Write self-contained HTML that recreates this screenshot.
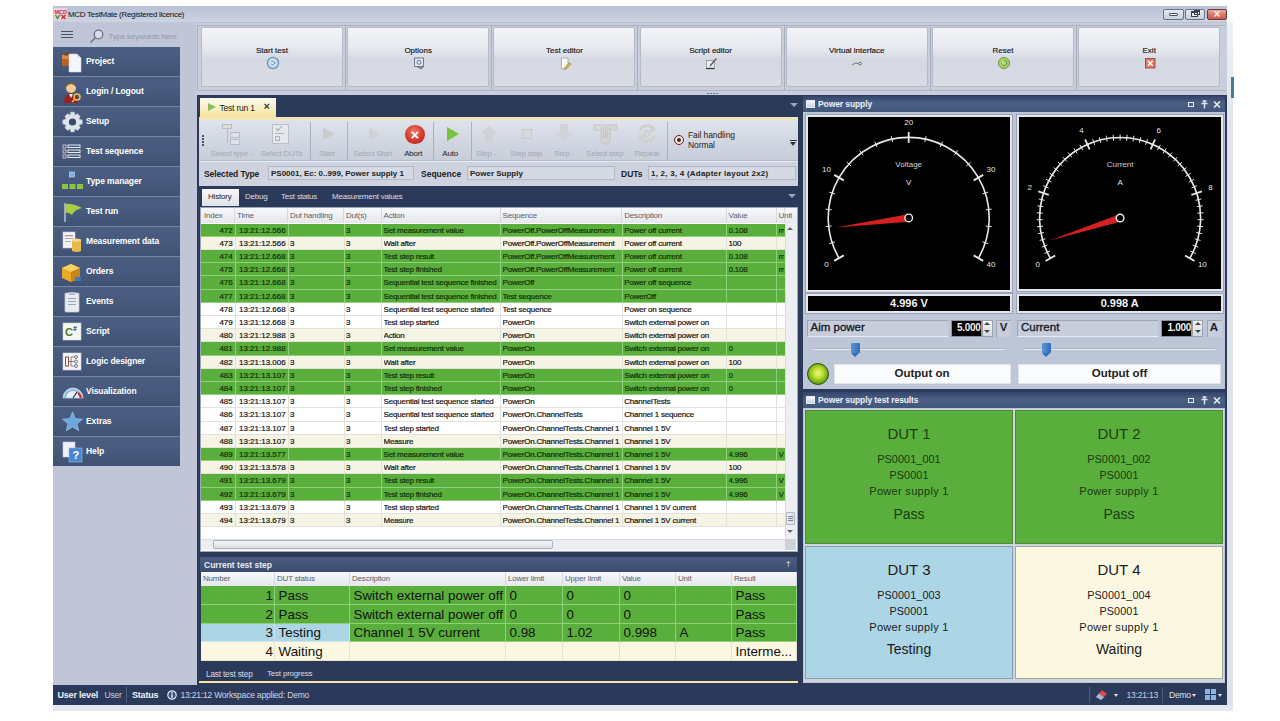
<!DOCTYPE html><html><head><meta charset="utf-8"><style>
*{box-sizing:border-box;margin:0;padding:0}
html,body{width:1280px;height:721px;overflow:hidden;background:#fff;font-family:"Liberation Sans",sans-serif;color:#000}
div,span{position:absolute;white-space:nowrap}
.nav{left:53px;width:127px;height:28.5px;background:linear-gradient(#4b5e81,#475a7d 50%,#3f5274);color:#fff;font-weight:bold;font-size:8.5px}
.nav span{left:33px;top:9px;letter-spacing:-0.1px}
.hl{left:53px;width:128px;height:1px;background:#8494b0}
.tbtn{top:27px;width:142px;height:60px;border:1px solid #b3bbc8;border-radius:2px;background:linear-gradient(#f3f4f8,#e6e8ee 35%,#d4d8e1 55%,#d9dce5);text-align:center;font-size:8px;color:#151515;-webkit-text-stroke:0.15px currentColor}
.tbtn span{left:0;right:0;top:18px;text-align:center}
.tbtn i{position:absolute;left:64px;top:30px;width:13px;height:13px}
.g{font-size:8px;color:#111;letter-spacing:-0.2px;-webkit-text-stroke:0.2px currentColor}
</style></head><body>
<div style="left:53px;top:6px;width:1174px;height:699px;background:#c0c6d8"></div>
<div style="left:53px;top:705px;width:1174px;height:6px;background:#e3e8f0"></div>
<div style="left:53px;top:6px;width:1174px;height:16px;background:linear-gradient(#b8c1d5,#ccd3e2)"></div>
<svg style="position:absolute;left:54px;top:8px" width="13" height="12" viewBox="0 0 13 12"><rect x="0" y="0" width="13" height="12" fill="#f0d4d8"/><text x="0.5" y="5.5" font-size="5.5" font-weight="bold" fill="#c03040" font-family="Liberation Sans">MCD</text><path d="M1.5 7 L3.5 10.5 L6 6.5" fill="none" stroke="#3a8a3a" stroke-width="1.4"/><path d="M7.5 7 L11.5 11 M11.5 7 L7.5 11" stroke="#c03040" stroke-width="1.6"/></svg>
<div style="left:68px;top:9.5px;font-size:8px;color:#111;letter-spacing:-0.3px">MCD TestMate (Registered licence)</div>
<div style="left:1163px;top:9px;width:21px;height:11px;border:1px solid #6a7384;border-radius:2px;background:linear-gradient(#e4eaf1,#c6d0dc)"></div>
<div style="left:1185px;top:9px;width:20px;height:11px;border:1px solid #6a7384;border-radius:2px;background:linear-gradient(#e4eaf1,#c6d0dc)"></div>
<div style="left:1207px;top:9px;width:20px;height:11px;border:1px solid #6a3a38;border-radius:2px;background:linear-gradient(#eeaa9c,#d8786a 50%,#c85a4c)"></div>
<div style="left:1169px;top:13px;width:9px;height:3px;background:#f4f6f9;border:1px solid #4a5264;border-radius:1px"></div>
<div style="left:1191px;top:11px;width:7px;height:6px;border:1px solid #3a4252;border-top-width:2px;background:#eef1f5"></div>
<div style="left:1194px;top:10px;width:6px;height:5px;border:1px solid #3a4252;border-top-width:2px"></div>
<div style="left:1207px;width:20px;top:9px;text-align:center;font-size:12px;font-weight:bold;color:#fbe8e4;line-height:11px">&#215;</div>
<div style="left:53px;top:22px;width:144px;height:663px;background:#c0c5d8"></div>
<div style="left:53px;top:47px;width:127px;height:418px;background:#7487a7"></div>
<div class="nav" style="top:47.0px"><span>Project</span></div>
<div class="nav" style="top:77.0px"><span>Login / Logout</span></div>
<div class="nav" style="top:107.0px"><span>Setup</span></div>
<div class="nav" style="top:137.0px"><span>Test sequence</span></div>
<div class="nav" style="top:167.0px"><span>Type manager</span></div>
<div class="nav" style="top:197.0px"><span>Test run</span></div>
<div class="nav" style="top:227.0px"><span>Measurement data</span></div>
<div class="nav" style="top:257.0px"><span>Orders</span></div>
<div class="nav" style="top:287.0px"><span>Events</span></div>
<div class="nav" style="top:317.0px"><span>Script</span></div>
<div class="nav" style="top:347.0px"><span>Logic designer</span></div>
<div class="nav" style="top:377.0px"><span>Visualization</span></div>
<div class="nav" style="top:407.0px"><span>Extras</span></div>
<div class="nav" style="top:437.0px"><span>Help</span></div>
<div style="left:196px;top:22px;width:1031px;height:73px;background:#c8cedb;border-top:1px solid #b8bfcd"></div>
<div style="left:197px;top:25px;width:1029px;height:1px;background:#a9b1c1"></div>
<div style="left:197px;top:89.5px;width:1029px;height:1px;background:#b0b8c6"></div>
<div style="left:197px;top:26px;width:1px;height:64px;background:#a9b1c1"></div>
<div style="left:344.9px;top:26px;width:1px;height:64px;background:#a6aebe"></div>
<div style="left:491.1px;top:26px;width:1px;height:64px;background:#a6aebe"></div>
<div style="left:637.3px;top:26px;width:1px;height:64px;background:#a6aebe"></div>
<div style="left:783.5px;top:26px;width:1px;height:64px;background:#a6aebe"></div>
<div style="left:929.7px;top:26px;width:1px;height:64px;background:#a6aebe"></div>
<div style="left:1075.9px;top:26px;width:1px;height:64px;background:#a6aebe"></div>
<div class="tbtn" style="left:201.0px"><span>Start test</span></div>
<div class="tbtn" style="left:347.2px"><span>Options</span></div>
<div class="tbtn" style="left:493.4px"><span>Test editor</span></div>
<div class="tbtn" style="left:639.6px"><span>Script editor</span></div>
<div class="tbtn" style="left:785.8px"><span>Virtual interface</span></div>
<div class="tbtn" style="left:932.0px"><span>Reset</span></div>
<div class="tbtn" style="left:1078.2px"><span>Exit</span></div>
<div style="left:197px;top:95px;width:1030px;height:590px;background:#2c3a5a"></div>
<div style="left:200px;top:98px;width:76px;height:20px;background:linear-gradient(#fcf9ee,#f8efc6 55%,#f5dd8e)"></div>
<div style="left:207.5px;top:102.5px;width:0;height:0;border-top:4px solid transparent;border-bottom:4px solid transparent;border-left:8px solid #8cbc5a"></div>
<div style="left:219.5px;top:102.5px;font-size:8.6px;color:#1a1a1a;letter-spacing:-0.25px">Test run 1</div>
<div style="left:263.5px;top:100px;font-size:11px;font-weight:bold;color:#3a3a3a">&#215;</div>
<div style="left:790px;top:103px;width:0;height:0;border-left:4px solid transparent;border-right:4px solid transparent;border-top:4px solid #9aa6bd"></div>
<div style="left:199px;top:116.5px;width:599px;height:3.5px;background:#f0e6b8"></div>
<div style="left:199px;top:120px;width:599px;height:41px;background:linear-gradient(#dfe3ec,#d2d7e2 50%,#c8ceda);border-bottom:1px solid #b3bbca"></div>
<div style="left:202px;top:135px;width:2px;height:2px;background:#4b5670"></div>
<div style="left:202px;top:138px;width:2px;height:2px;background:#4b5670"></div>
<div style="left:202px;top:141px;width:2px;height:2px;background:#4b5670"></div>
<div style="left:202px;top:144px;width:2px;height:2px;background:#4b5670"></div>
<div style="left:310px;top:122px;width:1px;height:38px;background:#a9b0be"></div>
<div style="left:347px;top:122px;width:1px;height:38px;background:#a9b0be"></div>
<div style="left:433px;top:122px;width:1px;height:38px;background:#a9b0be"></div>
<div style="left:471px;top:122px;width:1px;height:38px;background:#a9b0be"></div>
<div style="left:667px;top:122px;width:1px;height:38px;background:#a9b0be"></div>
<div style="left:210.5px;top:149px;font-size:8px;color:#a2a8b2;letter-spacing:-0.2px">Select type -</div>
<div style="left:260.5px;top:149px;font-size:8px;color:#a2a8b2;letter-spacing:-0.2px">Select DUTs</div>
<div style="left:319px;top:149px;font-size:8px;color:#a2a8b2;letter-spacing:-0.2px">Start</div>
<div style="left:353.4px;top:149px;font-size:8px;color:#a2a8b2;letter-spacing:-0.2px">Select Start</div>
<div style="left:404.2px;top:149px;font-size:8px;color:#222;letter-spacing:-0.2px">Abort</div>
<div style="left:442.3px;top:149px;font-size:8px;color:#222;letter-spacing:-0.2px">Auto</div>
<div style="left:476px;top:149px;font-size:8px;color:#a2a8b2;letter-spacing:-0.2px">Step -</div>
<div style="left:510px;top:149px;font-size:8px;color:#a2a8b2;letter-spacing:-0.2px">Step stop</div>
<div style="left:554px;top:149px;font-size:8px;color:#a2a8b2;letter-spacing:-0.2px">Step -</div>
<div style="left:586px;top:149px;font-size:8px;color:#a2a8b2;letter-spacing:-0.2px">Select step</div>
<div style="left:634.4px;top:149px;font-size:8px;color:#a2a8b2;letter-spacing:-0.2px">Repeat</div>
<div style="left:222px;top:124px;width:10px;height:4.5px;border:1px solid #b8bcc4;background:#dcdcd8"></div>
<div style="left:227px;top:128px;width:1px;height:15px;background:#b6bcc8"></div>
<div style="left:230px;top:132px;width:10px;height:6px;border:1px solid #b6bcc8;background:#dfe2e8"></div>
<div style="left:230px;top:139px;width:10px;height:6px;border:1px solid #b6bcc8;background:#dfe2e8"></div>
<div style="left:272px;top:124px;width:17px;height:20px;border:1px solid #b9bec9;background:#e6e8ec"></div>
<svg style="position:absolute;left:275px;top:125px" width="8" height="7" viewBox="0 0 8 7"><path d="M1 3.5 L3 5.5 L7 1" fill="none" stroke="#a8acb0" stroke-width="1.1"/></svg>
<div style="left:275px;top:133px;width:9px;height:1px;background:#b0b4ba"></div>
<div style="left:275px;top:136px;width:5px;height:5px;border:1px solid #aeb3bd"></div>
<div style="left:323px;top:128px;width:0;height:0;border-top:6px solid transparent;border-bottom:6px solid transparent;border-left:12px solid #c9cbc9"></div>
<div style="left:369px;top:128px;width:0;height:0;border-top:6px solid transparent;border-bottom:6px solid transparent;border-left:11px solid #cfd1d3"></div>
<div style="left:405px;top:124.5px;width:19.5px;height:19.5px;border-radius:50%;background:radial-gradient(circle at 45% 35%,#f07a6a,#d0392c 55%,#a8261d);box-shadow:0 0 1px #e9a8a0"></div>
<div style="left:407px;top:125px;width:16px;text-align:center;font-size:15px;line-height:19px;font-weight:bold;color:#fff">&#215;</div>
<div style="left:447px;top:127px;width:0;height:0;border-top:7px solid transparent;border-bottom:7px solid transparent;border-left:12px solid #78c23e"></div>
<div style="left:481px;top:125px;width:0;height:0;border-left:8px solid transparent;border-right:8px solid transparent;border-bottom:9px solid #cfd2d6"></div>
<div style="left:485px;top:134px;width:8px;height:9px;background:#cfd2d6"></div>
<div style="left:522px;top:129px;width:10px;height:10px;background:#d6d8dc;border:1px solid #c6c9ce"></div>
<div style="left:560px;top:124px;width:8px;height:9px;background:#cfd2d6"></div>
<div style="left:556px;top:133px;width:0;height:0;border-left:8px solid transparent;border-right:8px solid transparent;border-top:9px solid #cfd2d6"></div>
<svg style="position:absolute;left:593px;top:123px" width="25" height="22" viewBox="0 0 25 22"><path d="M1 2 H24 V7 H18 M1 2 V7 H7" fill="#d6d6d2" stroke="#c4c6c8" stroke-width="1"/><path d="M8 5 H17 V16 Q17 21 12.5 21 Q8 21 8 16 Z" fill="#d4d4d0" stroke="#c0c2c4" stroke-width="1"/><path d="M10.5 7 V15 M12.5 7 V15 M14.5 7 V15" stroke="#bcbec0" stroke-width="0.8"/></svg>
<svg style="position:absolute;left:636px;top:123px" width="22" height="21" viewBox="0 0 22 21"><path d="M4 8 A7.5 7.5 0 0 1 18 7" fill="none" stroke="#cfcfcb" stroke-width="2.6"/><path d="M18 13 A7.5 7.5 0 0 1 4 14" fill="none" stroke="#cfcfcb" stroke-width="2.6"/><path d="M15 4 L20 8 L14 9 Z" fill="#cfcfcb"/><path d="M7 17 L2 13 L8 12 Z" fill="#cfcfcb"/><circle cx="11" cy="10.5" r="3" fill="#d8d8d4" stroke="#c4c4c0" stroke-width="0.8"/></svg>
<div style="left:674px;top:135px;width:10px;height:10px;border-radius:50%;border:1.6px solid #6a1a1a;background:#efe6e0"></div>
<div style="left:677px;top:138px;width:4px;height:4px;border-radius:50%;background:#3a3028"></div>
<div style="left:688px;top:130px;font-size:8.5px;color:#222;letter-spacing:-0.1px">Fail handling</div>
<div style="left:688px;top:140px;font-size:8.5px;color:#222;letter-spacing:-0.1px">Normal</div>
<div style="left:790px;top:140px;width:7px;height:1px;background:#334"></div>
<div style="left:790px;top:142px;width:0;height:0;border-left:3.5px solid transparent;border-right:3.5px solid transparent;border-top:4px solid #334"></div>
<div style="left:199px;top:161px;width:599px;height:25px;background:#cdd2de;border-top:1px solid #e9ecf2"></div>
<div style="left:204px;top:169px;font-size:8.5px;font-weight:bold;color:#222;letter-spacing:-0.1px">Selected Type</div>
<div style="left:268px;top:166px;width:146px;height:14px;background:#d4d9e3;border:1px solid #b0b8c7"></div>
<div style="left:271px;top:168.5px;font-size:8px;font-weight:bold;color:#222">PS0001, Ec: 0..999, Power supply 1</div>
<div style="left:421px;top:169px;font-size:8.5px;font-weight:bold;color:#222">Sequence</div>
<div style="left:467px;top:166px;width:148px;height:14px;background:#d4d9e3;border:1px solid #b0b8c7"></div>
<div style="left:470px;top:168.5px;font-size:8px;font-weight:bold;color:#222">Power Supply</div>
<div style="left:621px;top:169px;font-size:8.5px;font-weight:bold;color:#222">DUTs</div>
<div style="left:648px;top:166px;width:148px;height:14px;background:#d4d9e3;border:1px solid #b0b8c7"></div>
<div style="left:651px;top:168.5px;font-size:8px;font-weight:bold;color:#222;letter-spacing:0.23px">1, 2, 3, 4 (Adapter layout 2x2)</div>
<div style="left:202px;top:189px;width:37px;height:17px;background:linear-gradient(#f6f7f9,#dfe2e8)"></div>
<div style="left:208px;top:192px;font-size:8px;color:#222;letter-spacing:-0.2px">History</div>
<div style="left:245px;top:192px;font-size:8px;color:#d8dde8;letter-spacing:-0.2px">Debug</div>
<div style="left:281px;top:192px;font-size:8px;color:#d8dde8;letter-spacing:-0.2px">Test status</div>
<div style="left:332px;top:192px;font-size:8px;color:#d8dde8;letter-spacing:-0.2px">Measurement values</div>
<div style="left:787.5px;top:194px;width:0;height:0;border-left:4px solid transparent;border-right:4px solid transparent;border-top:4px solid #9aa6bd"></div>
<div style="left:200px;top:207px;width:598px;height:345px;background:#fff;border:1px solid #9ea8ba"></div>
<div style="left:201px;top:208px;width:596px;height:15px;background:linear-gradient(#f7f8fa,#e5e7ec)"></div>
<div style="left:202px;top:208px;width:33px;height:15px;border-right:1px solid #d5d8de"></div>
<div class="g" style="left:204px;top:211px;color:#5c6068;-webkit-text-stroke:0">Index</div>
<div style="left:235px;top:208px;width:53px;height:15px;border-right:1px solid #d5d8de"></div>
<div class="g" style="left:237px;top:211px;color:#5c6068;-webkit-text-stroke:0">Time</div>
<div style="left:288px;top:208px;width:56px;height:15px;border-right:1px solid #d5d8de"></div>
<div class="g" style="left:290px;top:211px;color:#5c6068;-webkit-text-stroke:0">Dut handling</div>
<div style="left:344px;top:208px;width:37.5px;height:15px;border-right:1px solid #d5d8de"></div>
<div class="g" style="left:346px;top:211px;color:#5c6068;-webkit-text-stroke:0">Dut(s)</div>
<div style="left:381.5px;top:208px;width:119.0px;height:15px;border-right:1px solid #d5d8de"></div>
<div class="g" style="left:383.5px;top:211px;color:#5c6068;-webkit-text-stroke:0">Action</div>
<div style="left:500.5px;top:208px;width:121.79999999999995px;height:15px;border-right:1px solid #d5d8de"></div>
<div class="g" style="left:502.5px;top:211px;color:#5c6068;-webkit-text-stroke:0">Sequence</div>
<div style="left:622.3px;top:208px;width:104.30000000000007px;height:15px;border-right:1px solid #d5d8de"></div>
<div class="g" style="left:624.3px;top:211px;color:#5c6068;-webkit-text-stroke:0">Description</div>
<div style="left:726.6px;top:208px;width:50.0px;height:15px;border-right:1px solid #d5d8de"></div>
<div class="g" style="left:728.6px;top:211px;color:#5c6068;-webkit-text-stroke:0">Value</div>
<div style="left:776.6px;top:208px;width:8.399999999999977px;height:15px;border-right:1px solid #d5d8de"></div>
<div class="g" style="left:778.6px;top:211px;color:#5c6068;-webkit-text-stroke:0">Unit</div>
<div style="left:201px;top:223.50px;width:584px;height:13.20px;background:#5aae3c"></div>
<div style="left:234.5px;top:223.50px;width:1px;height:13.20px;background:#8fd07a"></div>
<div style="left:287.5px;top:223.50px;width:1px;height:13.20px;background:#8fd07a"></div>
<div style="left:343.5px;top:223.50px;width:1px;height:13.20px;background:#8fd07a"></div>
<div style="left:381.0px;top:223.50px;width:1px;height:13.20px;background:#8fd07a"></div>
<div style="left:500.0px;top:223.50px;width:1px;height:13.20px;background:#8fd07a"></div>
<div style="left:621.8px;top:223.50px;width:1px;height:13.20px;background:#8fd07a"></div>
<div style="left:726.1px;top:223.50px;width:1px;height:13.20px;background:#8fd07a"></div>
<div style="left:776.1px;top:223.50px;width:1px;height:13.20px;background:#8fd07a"></div>
<div style="left:201px;top:235.70px;width:584px;height:1px;background:#8fd07a"></div>
<div class="g" style="left:202px;width:30.5px;text-align:right;top:225.50px;color:#10300a;letter-spacing:-0.1px">472</div>
<div class="g" style="left:239px;top:225.50px;color:#10300a;overflow:hidden;width:50px;letter-spacing:0px">13:21:12.566</div>
<div class="g" style="left:346px;top:225.50px;color:#10300a;overflow:hidden;width:34.5px;letter-spacing:-0.2px">3</div>
<div class="g" style="left:383.5px;top:225.50px;color:#10300a;overflow:hidden;width:116.0px;letter-spacing:-0.2px">Set measurement value</div>
<div class="g" style="left:502.5px;top:225.50px;color:#10300a;overflow:hidden;width:118.79999999999995px;letter-spacing:-0.2px">PowerOff.PowerOffMeasurement</div>
<div class="g" style="left:624.3px;top:225.50px;color:#10300a;overflow:hidden;width:101.30000000000007px;letter-spacing:-0.2px">Power off current</div>
<div class="g" style="left:728.6px;top:225.50px;color:#10300a;overflow:hidden;width:47.0px;letter-spacing:-0.2px">0.108</div>
<div class="g" style="left:778.6px;top:225.50px;color:#10300a;overflow:hidden;width:5.399999999999977px;letter-spacing:-0.2px">m</div>
<div style="left:201px;top:236.70px;width:584px;height:13.20px;background:#f6f4e4"></div>
<div style="left:234.5px;top:236.70px;width:1px;height:13.20px;background:#e2e2da"></div>
<div style="left:287.5px;top:236.70px;width:1px;height:13.20px;background:#e2e2da"></div>
<div style="left:343.5px;top:236.70px;width:1px;height:13.20px;background:#e2e2da"></div>
<div style="left:381.0px;top:236.70px;width:1px;height:13.20px;background:#e2e2da"></div>
<div style="left:500.0px;top:236.70px;width:1px;height:13.20px;background:#e2e2da"></div>
<div style="left:621.8px;top:236.70px;width:1px;height:13.20px;background:#e2e2da"></div>
<div style="left:726.1px;top:236.70px;width:1px;height:13.20px;background:#e2e2da"></div>
<div style="left:776.1px;top:236.70px;width:1px;height:13.20px;background:#e2e2da"></div>
<div style="left:201px;top:248.90px;width:584px;height:1px;background:#e2e2da"></div>
<div class="g" style="left:202px;width:30.5px;text-align:right;top:238.70px;color:#151515;letter-spacing:-0.1px">473</div>
<div class="g" style="left:239px;top:238.70px;color:#151515;overflow:hidden;width:50px;letter-spacing:0px">13:21:12.566</div>
<div class="g" style="left:290px;top:238.70px;color:#151515;overflow:hidden;width:53px;letter-spacing:-0.2px">3</div>
<div class="g" style="left:346px;top:238.70px;color:#151515;overflow:hidden;width:34.5px;letter-spacing:-0.2px">3</div>
<div class="g" style="left:383.5px;top:238.70px;color:#151515;overflow:hidden;width:116.0px;letter-spacing:-0.2px">Wait after</div>
<div class="g" style="left:502.5px;top:238.70px;color:#151515;overflow:hidden;width:118.79999999999995px;letter-spacing:-0.2px">PowerOff.PowerOffMeasurement</div>
<div class="g" style="left:624.3px;top:238.70px;color:#151515;overflow:hidden;width:101.30000000000007px;letter-spacing:-0.2px">Power off current</div>
<div class="g" style="left:728.6px;top:238.70px;color:#151515;overflow:hidden;width:47.0px;letter-spacing:-0.2px">100</div>
<div style="left:201px;top:249.90px;width:584px;height:13.20px;background:#5aae3c"></div>
<div style="left:234.5px;top:249.90px;width:1px;height:13.20px;background:#8fd07a"></div>
<div style="left:287.5px;top:249.90px;width:1px;height:13.20px;background:#8fd07a"></div>
<div style="left:343.5px;top:249.90px;width:1px;height:13.20px;background:#8fd07a"></div>
<div style="left:381.0px;top:249.90px;width:1px;height:13.20px;background:#8fd07a"></div>
<div style="left:500.0px;top:249.90px;width:1px;height:13.20px;background:#8fd07a"></div>
<div style="left:621.8px;top:249.90px;width:1px;height:13.20px;background:#8fd07a"></div>
<div style="left:726.1px;top:249.90px;width:1px;height:13.20px;background:#8fd07a"></div>
<div style="left:776.1px;top:249.90px;width:1px;height:13.20px;background:#8fd07a"></div>
<div style="left:201px;top:262.10px;width:584px;height:1px;background:#8fd07a"></div>
<div class="g" style="left:202px;width:30.5px;text-align:right;top:251.90px;color:#10300a;letter-spacing:-0.1px">474</div>
<div class="g" style="left:239px;top:251.90px;color:#10300a;overflow:hidden;width:50px;letter-spacing:0px">13:21:12.668</div>
<div class="g" style="left:290px;top:251.90px;color:#10300a;overflow:hidden;width:53px;letter-spacing:-0.2px">3</div>
<div class="g" style="left:346px;top:251.90px;color:#10300a;overflow:hidden;width:34.5px;letter-spacing:-0.2px">3</div>
<div class="g" style="left:383.5px;top:251.90px;color:#10300a;overflow:hidden;width:116.0px;letter-spacing:-0.2px">Test step result</div>
<div class="g" style="left:502.5px;top:251.90px;color:#10300a;overflow:hidden;width:118.79999999999995px;letter-spacing:-0.2px">PowerOff.PowerOffMeasurement</div>
<div class="g" style="left:624.3px;top:251.90px;color:#10300a;overflow:hidden;width:101.30000000000007px;letter-spacing:-0.2px">Power off current</div>
<div class="g" style="left:728.6px;top:251.90px;color:#10300a;overflow:hidden;width:47.0px;letter-spacing:-0.2px">0.108</div>
<div class="g" style="left:778.6px;top:251.90px;color:#10300a;overflow:hidden;width:5.399999999999977px;letter-spacing:-0.2px">m</div>
<div style="left:201px;top:263.10px;width:584px;height:13.20px;background:#5aae3c"></div>
<div style="left:234.5px;top:263.10px;width:1px;height:13.20px;background:#8fd07a"></div>
<div style="left:287.5px;top:263.10px;width:1px;height:13.20px;background:#8fd07a"></div>
<div style="left:343.5px;top:263.10px;width:1px;height:13.20px;background:#8fd07a"></div>
<div style="left:381.0px;top:263.10px;width:1px;height:13.20px;background:#8fd07a"></div>
<div style="left:500.0px;top:263.10px;width:1px;height:13.20px;background:#8fd07a"></div>
<div style="left:621.8px;top:263.10px;width:1px;height:13.20px;background:#8fd07a"></div>
<div style="left:726.1px;top:263.10px;width:1px;height:13.20px;background:#8fd07a"></div>
<div style="left:776.1px;top:263.10px;width:1px;height:13.20px;background:#8fd07a"></div>
<div style="left:201px;top:275.30px;width:584px;height:1px;background:#8fd07a"></div>
<div class="g" style="left:202px;width:30.5px;text-align:right;top:265.10px;color:#10300a;letter-spacing:-0.1px">475</div>
<div class="g" style="left:239px;top:265.10px;color:#10300a;overflow:hidden;width:50px;letter-spacing:0px">13:21:12.668</div>
<div class="g" style="left:290px;top:265.10px;color:#10300a;overflow:hidden;width:53px;letter-spacing:-0.2px">3</div>
<div class="g" style="left:346px;top:265.10px;color:#10300a;overflow:hidden;width:34.5px;letter-spacing:-0.2px">3</div>
<div class="g" style="left:383.5px;top:265.10px;color:#10300a;overflow:hidden;width:116.0px;letter-spacing:-0.2px">Test step finished</div>
<div class="g" style="left:502.5px;top:265.10px;color:#10300a;overflow:hidden;width:118.79999999999995px;letter-spacing:-0.2px">PowerOff.PowerOffMeasurement</div>
<div class="g" style="left:624.3px;top:265.10px;color:#10300a;overflow:hidden;width:101.30000000000007px;letter-spacing:-0.2px">Power off current</div>
<div class="g" style="left:728.6px;top:265.10px;color:#10300a;overflow:hidden;width:47.0px;letter-spacing:-0.2px">0.108</div>
<div class="g" style="left:778.6px;top:265.10px;color:#10300a;overflow:hidden;width:5.399999999999977px;letter-spacing:-0.2px">m</div>
<div style="left:201px;top:276.30px;width:584px;height:13.20px;background:#5aae3c"></div>
<div style="left:234.5px;top:276.30px;width:1px;height:13.20px;background:#8fd07a"></div>
<div style="left:287.5px;top:276.30px;width:1px;height:13.20px;background:#8fd07a"></div>
<div style="left:343.5px;top:276.30px;width:1px;height:13.20px;background:#8fd07a"></div>
<div style="left:381.0px;top:276.30px;width:1px;height:13.20px;background:#8fd07a"></div>
<div style="left:500.0px;top:276.30px;width:1px;height:13.20px;background:#8fd07a"></div>
<div style="left:621.8px;top:276.30px;width:1px;height:13.20px;background:#8fd07a"></div>
<div style="left:726.1px;top:276.30px;width:1px;height:13.20px;background:#8fd07a"></div>
<div style="left:776.1px;top:276.30px;width:1px;height:13.20px;background:#8fd07a"></div>
<div style="left:201px;top:288.50px;width:584px;height:1px;background:#8fd07a"></div>
<div class="g" style="left:202px;width:30.5px;text-align:right;top:278.30px;color:#10300a;letter-spacing:-0.1px">476</div>
<div class="g" style="left:239px;top:278.30px;color:#10300a;overflow:hidden;width:50px;letter-spacing:0px">13:21:12.668</div>
<div class="g" style="left:290px;top:278.30px;color:#10300a;overflow:hidden;width:53px;letter-spacing:-0.2px">3</div>
<div class="g" style="left:346px;top:278.30px;color:#10300a;overflow:hidden;width:34.5px;letter-spacing:-0.2px">3</div>
<div class="g" style="left:383.5px;top:278.30px;color:#10300a;overflow:hidden;width:116.0px;letter-spacing:-0.2px">Sequential test sequence finished</div>
<div class="g" style="left:502.5px;top:278.30px;color:#10300a;overflow:hidden;width:118.79999999999995px;letter-spacing:-0.2px">PowerOff</div>
<div class="g" style="left:624.3px;top:278.30px;color:#10300a;overflow:hidden;width:101.30000000000007px;letter-spacing:-0.2px">Power off sequence</div>
<div style="left:201px;top:289.50px;width:584px;height:13.20px;background:#5aae3c"></div>
<div style="left:234.5px;top:289.50px;width:1px;height:13.20px;background:#8fd07a"></div>
<div style="left:287.5px;top:289.50px;width:1px;height:13.20px;background:#8fd07a"></div>
<div style="left:343.5px;top:289.50px;width:1px;height:13.20px;background:#8fd07a"></div>
<div style="left:381.0px;top:289.50px;width:1px;height:13.20px;background:#8fd07a"></div>
<div style="left:500.0px;top:289.50px;width:1px;height:13.20px;background:#8fd07a"></div>
<div style="left:621.8px;top:289.50px;width:1px;height:13.20px;background:#8fd07a"></div>
<div style="left:726.1px;top:289.50px;width:1px;height:13.20px;background:#8fd07a"></div>
<div style="left:776.1px;top:289.50px;width:1px;height:13.20px;background:#8fd07a"></div>
<div style="left:201px;top:301.70px;width:584px;height:1px;background:#8fd07a"></div>
<div class="g" style="left:202px;width:30.5px;text-align:right;top:291.50px;color:#10300a;letter-spacing:-0.1px">477</div>
<div class="g" style="left:239px;top:291.50px;color:#10300a;overflow:hidden;width:50px;letter-spacing:0px">13:21:12.668</div>
<div class="g" style="left:290px;top:291.50px;color:#10300a;overflow:hidden;width:53px;letter-spacing:-0.2px">3</div>
<div class="g" style="left:346px;top:291.50px;color:#10300a;overflow:hidden;width:34.5px;letter-spacing:-0.2px">3</div>
<div class="g" style="left:383.5px;top:291.50px;color:#10300a;overflow:hidden;width:116.0px;letter-spacing:-0.2px">Sequential test sequence finished</div>
<div class="g" style="left:502.5px;top:291.50px;color:#10300a;overflow:hidden;width:118.79999999999995px;letter-spacing:-0.2px">Test sequence</div>
<div class="g" style="left:624.3px;top:291.50px;color:#10300a;overflow:hidden;width:101.30000000000007px;letter-spacing:-0.2px">PowerOff</div>
<div style="left:201px;top:302.70px;width:584px;height:13.20px;background:#ffffff"></div>
<div style="left:234.5px;top:302.70px;width:1px;height:13.20px;background:#e2e2da"></div>
<div style="left:287.5px;top:302.70px;width:1px;height:13.20px;background:#e2e2da"></div>
<div style="left:343.5px;top:302.70px;width:1px;height:13.20px;background:#e2e2da"></div>
<div style="left:381.0px;top:302.70px;width:1px;height:13.20px;background:#e2e2da"></div>
<div style="left:500.0px;top:302.70px;width:1px;height:13.20px;background:#e2e2da"></div>
<div style="left:621.8px;top:302.70px;width:1px;height:13.20px;background:#e2e2da"></div>
<div style="left:726.1px;top:302.70px;width:1px;height:13.20px;background:#e2e2da"></div>
<div style="left:776.1px;top:302.70px;width:1px;height:13.20px;background:#e2e2da"></div>
<div style="left:201px;top:314.90px;width:584px;height:1px;background:#e2e2da"></div>
<div class="g" style="left:202px;width:30.5px;text-align:right;top:304.70px;color:#151515;letter-spacing:-0.1px">478</div>
<div class="g" style="left:239px;top:304.70px;color:#151515;overflow:hidden;width:50px;letter-spacing:0px">13:21:12.668</div>
<div class="g" style="left:290px;top:304.70px;color:#151515;overflow:hidden;width:53px;letter-spacing:-0.2px">3</div>
<div class="g" style="left:346px;top:304.70px;color:#151515;overflow:hidden;width:34.5px;letter-spacing:-0.2px">3</div>
<div class="g" style="left:383.5px;top:304.70px;color:#151515;overflow:hidden;width:116.0px;letter-spacing:-0.2px">Sequential test sequence started</div>
<div class="g" style="left:502.5px;top:304.70px;color:#151515;overflow:hidden;width:118.79999999999995px;letter-spacing:-0.2px">Test sequence</div>
<div class="g" style="left:624.3px;top:304.70px;color:#151515;overflow:hidden;width:101.30000000000007px;letter-spacing:-0.2px">Power on sequence</div>
<div style="left:201px;top:315.90px;width:584px;height:13.20px;background:#ffffff"></div>
<div style="left:234.5px;top:315.90px;width:1px;height:13.20px;background:#e2e2da"></div>
<div style="left:287.5px;top:315.90px;width:1px;height:13.20px;background:#e2e2da"></div>
<div style="left:343.5px;top:315.90px;width:1px;height:13.20px;background:#e2e2da"></div>
<div style="left:381.0px;top:315.90px;width:1px;height:13.20px;background:#e2e2da"></div>
<div style="left:500.0px;top:315.90px;width:1px;height:13.20px;background:#e2e2da"></div>
<div style="left:621.8px;top:315.90px;width:1px;height:13.20px;background:#e2e2da"></div>
<div style="left:726.1px;top:315.90px;width:1px;height:13.20px;background:#e2e2da"></div>
<div style="left:776.1px;top:315.90px;width:1px;height:13.20px;background:#e2e2da"></div>
<div style="left:201px;top:328.10px;width:584px;height:1px;background:#e2e2da"></div>
<div class="g" style="left:202px;width:30.5px;text-align:right;top:317.90px;color:#151515;letter-spacing:-0.1px">479</div>
<div class="g" style="left:239px;top:317.90px;color:#151515;overflow:hidden;width:50px;letter-spacing:0px">13:21:12.668</div>
<div class="g" style="left:290px;top:317.90px;color:#151515;overflow:hidden;width:53px;letter-spacing:-0.2px">3</div>
<div class="g" style="left:346px;top:317.90px;color:#151515;overflow:hidden;width:34.5px;letter-spacing:-0.2px">3</div>
<div class="g" style="left:383.5px;top:317.90px;color:#151515;overflow:hidden;width:116.0px;letter-spacing:-0.2px">Test step started</div>
<div class="g" style="left:502.5px;top:317.90px;color:#151515;overflow:hidden;width:118.79999999999995px;letter-spacing:-0.2px">PowerOn</div>
<div class="g" style="left:624.3px;top:317.90px;color:#151515;overflow:hidden;width:101.30000000000007px;letter-spacing:-0.2px">Switch external power on</div>
<div style="left:201px;top:329.10px;width:584px;height:13.20px;background:#f6f4e4"></div>
<div style="left:234.5px;top:329.10px;width:1px;height:13.20px;background:#e2e2da"></div>
<div style="left:287.5px;top:329.10px;width:1px;height:13.20px;background:#e2e2da"></div>
<div style="left:343.5px;top:329.10px;width:1px;height:13.20px;background:#e2e2da"></div>
<div style="left:381.0px;top:329.10px;width:1px;height:13.20px;background:#e2e2da"></div>
<div style="left:500.0px;top:329.10px;width:1px;height:13.20px;background:#e2e2da"></div>
<div style="left:621.8px;top:329.10px;width:1px;height:13.20px;background:#e2e2da"></div>
<div style="left:726.1px;top:329.10px;width:1px;height:13.20px;background:#e2e2da"></div>
<div style="left:776.1px;top:329.10px;width:1px;height:13.20px;background:#e2e2da"></div>
<div style="left:201px;top:341.30px;width:584px;height:1px;background:#e2e2da"></div>
<div class="g" style="left:202px;width:30.5px;text-align:right;top:331.10px;color:#151515;letter-spacing:-0.1px">480</div>
<div class="g" style="left:239px;top:331.10px;color:#151515;overflow:hidden;width:50px;letter-spacing:0px">13:21:12.988</div>
<div class="g" style="left:290px;top:331.10px;color:#151515;overflow:hidden;width:53px;letter-spacing:-0.2px">3</div>
<div class="g" style="left:346px;top:331.10px;color:#151515;overflow:hidden;width:34.5px;letter-spacing:-0.2px">3</div>
<div class="g" style="left:383.5px;top:331.10px;color:#151515;overflow:hidden;width:116.0px;letter-spacing:-0.2px">Action</div>
<div class="g" style="left:502.5px;top:331.10px;color:#151515;overflow:hidden;width:118.79999999999995px;letter-spacing:-0.2px">PowerOn</div>
<div class="g" style="left:624.3px;top:331.10px;color:#151515;overflow:hidden;width:101.30000000000007px;letter-spacing:-0.2px">Switch external power on</div>
<div style="left:201px;top:342.30px;width:584px;height:13.20px;background:#5aae3c"></div>
<div style="left:234.5px;top:342.30px;width:1px;height:13.20px;background:#8fd07a"></div>
<div style="left:287.5px;top:342.30px;width:1px;height:13.20px;background:#8fd07a"></div>
<div style="left:343.5px;top:342.30px;width:1px;height:13.20px;background:#8fd07a"></div>
<div style="left:381.0px;top:342.30px;width:1px;height:13.20px;background:#8fd07a"></div>
<div style="left:500.0px;top:342.30px;width:1px;height:13.20px;background:#8fd07a"></div>
<div style="left:621.8px;top:342.30px;width:1px;height:13.20px;background:#8fd07a"></div>
<div style="left:726.1px;top:342.30px;width:1px;height:13.20px;background:#8fd07a"></div>
<div style="left:776.1px;top:342.30px;width:1px;height:13.20px;background:#8fd07a"></div>
<div style="left:201px;top:354.50px;width:584px;height:1px;background:#8fd07a"></div>
<div class="g" style="left:202px;width:30.5px;text-align:right;top:344.30px;color:#10300a;letter-spacing:-0.1px">481</div>
<div class="g" style="left:239px;top:344.30px;color:#10300a;overflow:hidden;width:50px;letter-spacing:0px">13:21:12.988</div>
<div class="g" style="left:346px;top:344.30px;color:#10300a;overflow:hidden;width:34.5px;letter-spacing:-0.2px">3</div>
<div class="g" style="left:383.5px;top:344.30px;color:#10300a;overflow:hidden;width:116.0px;letter-spacing:-0.2px">Set measurement value</div>
<div class="g" style="left:502.5px;top:344.30px;color:#10300a;overflow:hidden;width:118.79999999999995px;letter-spacing:-0.2px">PowerOn</div>
<div class="g" style="left:624.3px;top:344.30px;color:#10300a;overflow:hidden;width:101.30000000000007px;letter-spacing:-0.2px">Switch external power on</div>
<div class="g" style="left:728.6px;top:344.30px;color:#10300a;overflow:hidden;width:47.0px;letter-spacing:-0.2px">0</div>
<div style="left:201px;top:355.50px;width:584px;height:13.20px;background:#f6f4e4"></div>
<div style="left:234.5px;top:355.50px;width:1px;height:13.20px;background:#e2e2da"></div>
<div style="left:287.5px;top:355.50px;width:1px;height:13.20px;background:#e2e2da"></div>
<div style="left:343.5px;top:355.50px;width:1px;height:13.20px;background:#e2e2da"></div>
<div style="left:381.0px;top:355.50px;width:1px;height:13.20px;background:#e2e2da"></div>
<div style="left:500.0px;top:355.50px;width:1px;height:13.20px;background:#e2e2da"></div>
<div style="left:621.8px;top:355.50px;width:1px;height:13.20px;background:#e2e2da"></div>
<div style="left:726.1px;top:355.50px;width:1px;height:13.20px;background:#e2e2da"></div>
<div style="left:776.1px;top:355.50px;width:1px;height:13.20px;background:#e2e2da"></div>
<div style="left:201px;top:367.70px;width:584px;height:1px;background:#e2e2da"></div>
<div class="g" style="left:202px;width:30.5px;text-align:right;top:357.50px;color:#151515;letter-spacing:-0.1px">482</div>
<div class="g" style="left:239px;top:357.50px;color:#151515;overflow:hidden;width:50px;letter-spacing:0px">13:21:13.006</div>
<div class="g" style="left:290px;top:357.50px;color:#151515;overflow:hidden;width:53px;letter-spacing:-0.2px">3</div>
<div class="g" style="left:346px;top:357.50px;color:#151515;overflow:hidden;width:34.5px;letter-spacing:-0.2px">3</div>
<div class="g" style="left:383.5px;top:357.50px;color:#151515;overflow:hidden;width:116.0px;letter-spacing:-0.2px">Wait after</div>
<div class="g" style="left:502.5px;top:357.50px;color:#151515;overflow:hidden;width:118.79999999999995px;letter-spacing:-0.2px">PowerOn</div>
<div class="g" style="left:624.3px;top:357.50px;color:#151515;overflow:hidden;width:101.30000000000007px;letter-spacing:-0.2px">Switch external power on</div>
<div class="g" style="left:728.6px;top:357.50px;color:#151515;overflow:hidden;width:47.0px;letter-spacing:-0.2px">100</div>
<div style="left:201px;top:368.70px;width:584px;height:13.20px;background:#5aae3c"></div>
<div style="left:234.5px;top:368.70px;width:1px;height:13.20px;background:#8fd07a"></div>
<div style="left:287.5px;top:368.70px;width:1px;height:13.20px;background:#8fd07a"></div>
<div style="left:343.5px;top:368.70px;width:1px;height:13.20px;background:#8fd07a"></div>
<div style="left:381.0px;top:368.70px;width:1px;height:13.20px;background:#8fd07a"></div>
<div style="left:500.0px;top:368.70px;width:1px;height:13.20px;background:#8fd07a"></div>
<div style="left:621.8px;top:368.70px;width:1px;height:13.20px;background:#8fd07a"></div>
<div style="left:726.1px;top:368.70px;width:1px;height:13.20px;background:#8fd07a"></div>
<div style="left:776.1px;top:368.70px;width:1px;height:13.20px;background:#8fd07a"></div>
<div style="left:201px;top:380.90px;width:584px;height:1px;background:#8fd07a"></div>
<div class="g" style="left:202px;width:30.5px;text-align:right;top:370.70px;color:#10300a;letter-spacing:-0.1px">483</div>
<div class="g" style="left:239px;top:370.70px;color:#10300a;overflow:hidden;width:50px;letter-spacing:0px">13:21:13.107</div>
<div class="g" style="left:290px;top:370.70px;color:#10300a;overflow:hidden;width:53px;letter-spacing:-0.2px">3</div>
<div class="g" style="left:346px;top:370.70px;color:#10300a;overflow:hidden;width:34.5px;letter-spacing:-0.2px">3</div>
<div class="g" style="left:383.5px;top:370.70px;color:#10300a;overflow:hidden;width:116.0px;letter-spacing:-0.2px">Test step result</div>
<div class="g" style="left:502.5px;top:370.70px;color:#10300a;overflow:hidden;width:118.79999999999995px;letter-spacing:-0.2px">PowerOn</div>
<div class="g" style="left:624.3px;top:370.70px;color:#10300a;overflow:hidden;width:101.30000000000007px;letter-spacing:-0.2px">Switch external power on</div>
<div class="g" style="left:728.6px;top:370.70px;color:#10300a;overflow:hidden;width:47.0px;letter-spacing:-0.2px">0</div>
<div style="left:201px;top:381.90px;width:584px;height:13.20px;background:#5aae3c"></div>
<div style="left:234.5px;top:381.90px;width:1px;height:13.20px;background:#8fd07a"></div>
<div style="left:287.5px;top:381.90px;width:1px;height:13.20px;background:#8fd07a"></div>
<div style="left:343.5px;top:381.90px;width:1px;height:13.20px;background:#8fd07a"></div>
<div style="left:381.0px;top:381.90px;width:1px;height:13.20px;background:#8fd07a"></div>
<div style="left:500.0px;top:381.90px;width:1px;height:13.20px;background:#8fd07a"></div>
<div style="left:621.8px;top:381.90px;width:1px;height:13.20px;background:#8fd07a"></div>
<div style="left:726.1px;top:381.90px;width:1px;height:13.20px;background:#8fd07a"></div>
<div style="left:776.1px;top:381.90px;width:1px;height:13.20px;background:#8fd07a"></div>
<div style="left:201px;top:394.10px;width:584px;height:1px;background:#8fd07a"></div>
<div class="g" style="left:202px;width:30.5px;text-align:right;top:383.90px;color:#10300a;letter-spacing:-0.1px">484</div>
<div class="g" style="left:239px;top:383.90px;color:#10300a;overflow:hidden;width:50px;letter-spacing:0px">13:21:13.107</div>
<div class="g" style="left:290px;top:383.90px;color:#10300a;overflow:hidden;width:53px;letter-spacing:-0.2px">3</div>
<div class="g" style="left:346px;top:383.90px;color:#10300a;overflow:hidden;width:34.5px;letter-spacing:-0.2px">3</div>
<div class="g" style="left:383.5px;top:383.90px;color:#10300a;overflow:hidden;width:116.0px;letter-spacing:-0.2px">Test step finished</div>
<div class="g" style="left:502.5px;top:383.90px;color:#10300a;overflow:hidden;width:118.79999999999995px;letter-spacing:-0.2px">PowerOn</div>
<div class="g" style="left:624.3px;top:383.90px;color:#10300a;overflow:hidden;width:101.30000000000007px;letter-spacing:-0.2px">Switch external power on</div>
<div class="g" style="left:728.6px;top:383.90px;color:#10300a;overflow:hidden;width:47.0px;letter-spacing:-0.2px">0</div>
<div style="left:201px;top:395.10px;width:584px;height:13.20px;background:#ffffff"></div>
<div style="left:234.5px;top:395.10px;width:1px;height:13.20px;background:#e2e2da"></div>
<div style="left:287.5px;top:395.10px;width:1px;height:13.20px;background:#e2e2da"></div>
<div style="left:343.5px;top:395.10px;width:1px;height:13.20px;background:#e2e2da"></div>
<div style="left:381.0px;top:395.10px;width:1px;height:13.20px;background:#e2e2da"></div>
<div style="left:500.0px;top:395.10px;width:1px;height:13.20px;background:#e2e2da"></div>
<div style="left:621.8px;top:395.10px;width:1px;height:13.20px;background:#e2e2da"></div>
<div style="left:726.1px;top:395.10px;width:1px;height:13.20px;background:#e2e2da"></div>
<div style="left:776.1px;top:395.10px;width:1px;height:13.20px;background:#e2e2da"></div>
<div style="left:201px;top:407.30px;width:584px;height:1px;background:#e2e2da"></div>
<div class="g" style="left:202px;width:30.5px;text-align:right;top:397.10px;color:#151515;letter-spacing:-0.1px">485</div>
<div class="g" style="left:239px;top:397.10px;color:#151515;overflow:hidden;width:50px;letter-spacing:0px">13:21:13.107</div>
<div class="g" style="left:290px;top:397.10px;color:#151515;overflow:hidden;width:53px;letter-spacing:-0.2px">3</div>
<div class="g" style="left:346px;top:397.10px;color:#151515;overflow:hidden;width:34.5px;letter-spacing:-0.2px">3</div>
<div class="g" style="left:383.5px;top:397.10px;color:#151515;overflow:hidden;width:116.0px;letter-spacing:-0.2px">Sequential test sequence started</div>
<div class="g" style="left:502.5px;top:397.10px;color:#151515;overflow:hidden;width:118.79999999999995px;letter-spacing:-0.2px">PowerOn</div>
<div class="g" style="left:624.3px;top:397.10px;color:#151515;overflow:hidden;width:101.30000000000007px;letter-spacing:-0.2px">ChannelTests</div>
<div style="left:201px;top:408.30px;width:584px;height:13.20px;background:#ffffff"></div>
<div style="left:234.5px;top:408.30px;width:1px;height:13.20px;background:#e2e2da"></div>
<div style="left:287.5px;top:408.30px;width:1px;height:13.20px;background:#e2e2da"></div>
<div style="left:343.5px;top:408.30px;width:1px;height:13.20px;background:#e2e2da"></div>
<div style="left:381.0px;top:408.30px;width:1px;height:13.20px;background:#e2e2da"></div>
<div style="left:500.0px;top:408.30px;width:1px;height:13.20px;background:#e2e2da"></div>
<div style="left:621.8px;top:408.30px;width:1px;height:13.20px;background:#e2e2da"></div>
<div style="left:726.1px;top:408.30px;width:1px;height:13.20px;background:#e2e2da"></div>
<div style="left:776.1px;top:408.30px;width:1px;height:13.20px;background:#e2e2da"></div>
<div style="left:201px;top:420.50px;width:584px;height:1px;background:#e2e2da"></div>
<div class="g" style="left:202px;width:30.5px;text-align:right;top:410.30px;color:#151515;letter-spacing:-0.1px">486</div>
<div class="g" style="left:239px;top:410.30px;color:#151515;overflow:hidden;width:50px;letter-spacing:0px">13:21:13.107</div>
<div class="g" style="left:290px;top:410.30px;color:#151515;overflow:hidden;width:53px;letter-spacing:-0.2px">3</div>
<div class="g" style="left:346px;top:410.30px;color:#151515;overflow:hidden;width:34.5px;letter-spacing:-0.2px">3</div>
<div class="g" style="left:383.5px;top:410.30px;color:#151515;overflow:hidden;width:116.0px;letter-spacing:-0.2px">Sequential test sequence started</div>
<div class="g" style="left:502.5px;top:410.30px;color:#151515;overflow:hidden;width:118.79999999999995px;letter-spacing:-0.2px">PowerOn.ChannelTests</div>
<div class="g" style="left:624.3px;top:410.30px;color:#151515;overflow:hidden;width:101.30000000000007px;letter-spacing:-0.2px">Channel 1 sequence</div>
<div style="left:201px;top:421.50px;width:584px;height:13.20px;background:#ffffff"></div>
<div style="left:234.5px;top:421.50px;width:1px;height:13.20px;background:#e2e2da"></div>
<div style="left:287.5px;top:421.50px;width:1px;height:13.20px;background:#e2e2da"></div>
<div style="left:343.5px;top:421.50px;width:1px;height:13.20px;background:#e2e2da"></div>
<div style="left:381.0px;top:421.50px;width:1px;height:13.20px;background:#e2e2da"></div>
<div style="left:500.0px;top:421.50px;width:1px;height:13.20px;background:#e2e2da"></div>
<div style="left:621.8px;top:421.50px;width:1px;height:13.20px;background:#e2e2da"></div>
<div style="left:726.1px;top:421.50px;width:1px;height:13.20px;background:#e2e2da"></div>
<div style="left:776.1px;top:421.50px;width:1px;height:13.20px;background:#e2e2da"></div>
<div style="left:201px;top:433.70px;width:584px;height:1px;background:#e2e2da"></div>
<div class="g" style="left:202px;width:30.5px;text-align:right;top:423.50px;color:#151515;letter-spacing:-0.1px">487</div>
<div class="g" style="left:239px;top:423.50px;color:#151515;overflow:hidden;width:50px;letter-spacing:0px">13:21:13.107</div>
<div class="g" style="left:290px;top:423.50px;color:#151515;overflow:hidden;width:53px;letter-spacing:-0.2px">3</div>
<div class="g" style="left:346px;top:423.50px;color:#151515;overflow:hidden;width:34.5px;letter-spacing:-0.2px">3</div>
<div class="g" style="left:383.5px;top:423.50px;color:#151515;overflow:hidden;width:116.0px;letter-spacing:-0.2px">Test step started</div>
<div class="g" style="left:502.5px;top:423.50px;color:#151515;overflow:hidden;width:118.79999999999995px;letter-spacing:-0.2px">PowerOn.ChannelTests.Channel 1</div>
<div class="g" style="left:624.3px;top:423.50px;color:#151515;overflow:hidden;width:101.30000000000007px;letter-spacing:-0.2px">Channel 1 5V</div>
<div style="left:201px;top:434.70px;width:584px;height:13.20px;background:#f6f4e4"></div>
<div style="left:234.5px;top:434.70px;width:1px;height:13.20px;background:#e2e2da"></div>
<div style="left:287.5px;top:434.70px;width:1px;height:13.20px;background:#e2e2da"></div>
<div style="left:343.5px;top:434.70px;width:1px;height:13.20px;background:#e2e2da"></div>
<div style="left:381.0px;top:434.70px;width:1px;height:13.20px;background:#e2e2da"></div>
<div style="left:500.0px;top:434.70px;width:1px;height:13.20px;background:#e2e2da"></div>
<div style="left:621.8px;top:434.70px;width:1px;height:13.20px;background:#e2e2da"></div>
<div style="left:726.1px;top:434.70px;width:1px;height:13.20px;background:#e2e2da"></div>
<div style="left:776.1px;top:434.70px;width:1px;height:13.20px;background:#e2e2da"></div>
<div style="left:201px;top:446.90px;width:584px;height:1px;background:#e2e2da"></div>
<div class="g" style="left:202px;width:30.5px;text-align:right;top:436.70px;color:#151515;letter-spacing:-0.1px">488</div>
<div class="g" style="left:239px;top:436.70px;color:#151515;overflow:hidden;width:50px;letter-spacing:0px">13:21:13.107</div>
<div class="g" style="left:290px;top:436.70px;color:#151515;overflow:hidden;width:53px;letter-spacing:-0.2px">3</div>
<div class="g" style="left:346px;top:436.70px;color:#151515;overflow:hidden;width:34.5px;letter-spacing:-0.2px">3</div>
<div class="g" style="left:383.5px;top:436.70px;color:#151515;overflow:hidden;width:116.0px;letter-spacing:-0.2px">Measure</div>
<div class="g" style="left:502.5px;top:436.70px;color:#151515;overflow:hidden;width:118.79999999999995px;letter-spacing:-0.2px">PowerOn.ChannelTests.Channel 1</div>
<div class="g" style="left:624.3px;top:436.70px;color:#151515;overflow:hidden;width:101.30000000000007px;letter-spacing:-0.2px">Channel 1 5V</div>
<div style="left:201px;top:447.90px;width:584px;height:13.20px;background:#5aae3c"></div>
<div style="left:234.5px;top:447.90px;width:1px;height:13.20px;background:#8fd07a"></div>
<div style="left:287.5px;top:447.90px;width:1px;height:13.20px;background:#8fd07a"></div>
<div style="left:343.5px;top:447.90px;width:1px;height:13.20px;background:#8fd07a"></div>
<div style="left:381.0px;top:447.90px;width:1px;height:13.20px;background:#8fd07a"></div>
<div style="left:500.0px;top:447.90px;width:1px;height:13.20px;background:#8fd07a"></div>
<div style="left:621.8px;top:447.90px;width:1px;height:13.20px;background:#8fd07a"></div>
<div style="left:726.1px;top:447.90px;width:1px;height:13.20px;background:#8fd07a"></div>
<div style="left:776.1px;top:447.90px;width:1px;height:13.20px;background:#8fd07a"></div>
<div style="left:201px;top:460.10px;width:584px;height:1px;background:#8fd07a"></div>
<div class="g" style="left:202px;width:30.5px;text-align:right;top:449.90px;color:#10300a;letter-spacing:-0.1px">489</div>
<div class="g" style="left:239px;top:449.90px;color:#10300a;overflow:hidden;width:50px;letter-spacing:0px">13:21:13.577</div>
<div class="g" style="left:346px;top:449.90px;color:#10300a;overflow:hidden;width:34.5px;letter-spacing:-0.2px">3</div>
<div class="g" style="left:383.5px;top:449.90px;color:#10300a;overflow:hidden;width:116.0px;letter-spacing:-0.2px">Set measurement value</div>
<div class="g" style="left:502.5px;top:449.90px;color:#10300a;overflow:hidden;width:118.79999999999995px;letter-spacing:-0.2px">PowerOn.ChannelTests.Channel 1</div>
<div class="g" style="left:624.3px;top:449.90px;color:#10300a;overflow:hidden;width:101.30000000000007px;letter-spacing:-0.2px">Channel 1 5V</div>
<div class="g" style="left:728.6px;top:449.90px;color:#10300a;overflow:hidden;width:47.0px;letter-spacing:-0.2px">4.996</div>
<div class="g" style="left:778.6px;top:449.90px;color:#10300a;overflow:hidden;width:5.399999999999977px;letter-spacing:-0.2px">V</div>
<div style="left:201px;top:461.10px;width:584px;height:13.20px;background:#f6f4e4"></div>
<div style="left:234.5px;top:461.10px;width:1px;height:13.20px;background:#e2e2da"></div>
<div style="left:287.5px;top:461.10px;width:1px;height:13.20px;background:#e2e2da"></div>
<div style="left:343.5px;top:461.10px;width:1px;height:13.20px;background:#e2e2da"></div>
<div style="left:381.0px;top:461.10px;width:1px;height:13.20px;background:#e2e2da"></div>
<div style="left:500.0px;top:461.10px;width:1px;height:13.20px;background:#e2e2da"></div>
<div style="left:621.8px;top:461.10px;width:1px;height:13.20px;background:#e2e2da"></div>
<div style="left:726.1px;top:461.10px;width:1px;height:13.20px;background:#e2e2da"></div>
<div style="left:776.1px;top:461.10px;width:1px;height:13.20px;background:#e2e2da"></div>
<div style="left:201px;top:473.30px;width:584px;height:1px;background:#e2e2da"></div>
<div class="g" style="left:202px;width:30.5px;text-align:right;top:463.10px;color:#151515;letter-spacing:-0.1px">490</div>
<div class="g" style="left:239px;top:463.10px;color:#151515;overflow:hidden;width:50px;letter-spacing:0px">13:21:13.578</div>
<div class="g" style="left:290px;top:463.10px;color:#151515;overflow:hidden;width:53px;letter-spacing:-0.2px">3</div>
<div class="g" style="left:346px;top:463.10px;color:#151515;overflow:hidden;width:34.5px;letter-spacing:-0.2px">3</div>
<div class="g" style="left:383.5px;top:463.10px;color:#151515;overflow:hidden;width:116.0px;letter-spacing:-0.2px">Wait after</div>
<div class="g" style="left:502.5px;top:463.10px;color:#151515;overflow:hidden;width:118.79999999999995px;letter-spacing:-0.2px">PowerOn.ChannelTests.Channel 1</div>
<div class="g" style="left:624.3px;top:463.10px;color:#151515;overflow:hidden;width:101.30000000000007px;letter-spacing:-0.2px">Channel 1 5V</div>
<div class="g" style="left:728.6px;top:463.10px;color:#151515;overflow:hidden;width:47.0px;letter-spacing:-0.2px">100</div>
<div style="left:201px;top:474.30px;width:584px;height:13.20px;background:#5aae3c"></div>
<div style="left:234.5px;top:474.30px;width:1px;height:13.20px;background:#8fd07a"></div>
<div style="left:287.5px;top:474.30px;width:1px;height:13.20px;background:#8fd07a"></div>
<div style="left:343.5px;top:474.30px;width:1px;height:13.20px;background:#8fd07a"></div>
<div style="left:381.0px;top:474.30px;width:1px;height:13.20px;background:#8fd07a"></div>
<div style="left:500.0px;top:474.30px;width:1px;height:13.20px;background:#8fd07a"></div>
<div style="left:621.8px;top:474.30px;width:1px;height:13.20px;background:#8fd07a"></div>
<div style="left:726.1px;top:474.30px;width:1px;height:13.20px;background:#8fd07a"></div>
<div style="left:776.1px;top:474.30px;width:1px;height:13.20px;background:#8fd07a"></div>
<div style="left:201px;top:486.50px;width:584px;height:1px;background:#8fd07a"></div>
<div class="g" style="left:202px;width:30.5px;text-align:right;top:476.30px;color:#10300a;letter-spacing:-0.1px">491</div>
<div class="g" style="left:239px;top:476.30px;color:#10300a;overflow:hidden;width:50px;letter-spacing:0px">13:21:13.679</div>
<div class="g" style="left:290px;top:476.30px;color:#10300a;overflow:hidden;width:53px;letter-spacing:-0.2px">3</div>
<div class="g" style="left:346px;top:476.30px;color:#10300a;overflow:hidden;width:34.5px;letter-spacing:-0.2px">3</div>
<div class="g" style="left:383.5px;top:476.30px;color:#10300a;overflow:hidden;width:116.0px;letter-spacing:-0.2px">Test step result</div>
<div class="g" style="left:502.5px;top:476.30px;color:#10300a;overflow:hidden;width:118.79999999999995px;letter-spacing:-0.2px">PowerOn.ChannelTests.Channel 1</div>
<div class="g" style="left:624.3px;top:476.30px;color:#10300a;overflow:hidden;width:101.30000000000007px;letter-spacing:-0.2px">Channel 1 5V</div>
<div class="g" style="left:728.6px;top:476.30px;color:#10300a;overflow:hidden;width:47.0px;letter-spacing:-0.2px">4.996</div>
<div class="g" style="left:778.6px;top:476.30px;color:#10300a;overflow:hidden;width:5.399999999999977px;letter-spacing:-0.2px">V</div>
<div style="left:201px;top:487.50px;width:584px;height:13.20px;background:#5aae3c"></div>
<div style="left:234.5px;top:487.50px;width:1px;height:13.20px;background:#8fd07a"></div>
<div style="left:287.5px;top:487.50px;width:1px;height:13.20px;background:#8fd07a"></div>
<div style="left:343.5px;top:487.50px;width:1px;height:13.20px;background:#8fd07a"></div>
<div style="left:381.0px;top:487.50px;width:1px;height:13.20px;background:#8fd07a"></div>
<div style="left:500.0px;top:487.50px;width:1px;height:13.20px;background:#8fd07a"></div>
<div style="left:621.8px;top:487.50px;width:1px;height:13.20px;background:#8fd07a"></div>
<div style="left:726.1px;top:487.50px;width:1px;height:13.20px;background:#8fd07a"></div>
<div style="left:776.1px;top:487.50px;width:1px;height:13.20px;background:#8fd07a"></div>
<div style="left:201px;top:499.70px;width:584px;height:1px;background:#8fd07a"></div>
<div class="g" style="left:202px;width:30.5px;text-align:right;top:489.50px;color:#10300a;letter-spacing:-0.1px">492</div>
<div class="g" style="left:239px;top:489.50px;color:#10300a;overflow:hidden;width:50px;letter-spacing:0px">13:21:13.679</div>
<div class="g" style="left:290px;top:489.50px;color:#10300a;overflow:hidden;width:53px;letter-spacing:-0.2px">3</div>
<div class="g" style="left:346px;top:489.50px;color:#10300a;overflow:hidden;width:34.5px;letter-spacing:-0.2px">3</div>
<div class="g" style="left:383.5px;top:489.50px;color:#10300a;overflow:hidden;width:116.0px;letter-spacing:-0.2px">Test step finished</div>
<div class="g" style="left:502.5px;top:489.50px;color:#10300a;overflow:hidden;width:118.79999999999995px;letter-spacing:-0.2px">PowerOn.ChannelTests.Channel 1</div>
<div class="g" style="left:624.3px;top:489.50px;color:#10300a;overflow:hidden;width:101.30000000000007px;letter-spacing:-0.2px">Channel 1 5V</div>
<div class="g" style="left:728.6px;top:489.50px;color:#10300a;overflow:hidden;width:47.0px;letter-spacing:-0.2px">4.996</div>
<div class="g" style="left:778.6px;top:489.50px;color:#10300a;overflow:hidden;width:5.399999999999977px;letter-spacing:-0.2px">V</div>
<div style="left:201px;top:500.70px;width:584px;height:13.20px;background:#ffffff"></div>
<div style="left:234.5px;top:500.70px;width:1px;height:13.20px;background:#e2e2da"></div>
<div style="left:287.5px;top:500.70px;width:1px;height:13.20px;background:#e2e2da"></div>
<div style="left:343.5px;top:500.70px;width:1px;height:13.20px;background:#e2e2da"></div>
<div style="left:381.0px;top:500.70px;width:1px;height:13.20px;background:#e2e2da"></div>
<div style="left:500.0px;top:500.70px;width:1px;height:13.20px;background:#e2e2da"></div>
<div style="left:621.8px;top:500.70px;width:1px;height:13.20px;background:#e2e2da"></div>
<div style="left:726.1px;top:500.70px;width:1px;height:13.20px;background:#e2e2da"></div>
<div style="left:776.1px;top:500.70px;width:1px;height:13.20px;background:#e2e2da"></div>
<div style="left:201px;top:512.90px;width:584px;height:1px;background:#e2e2da"></div>
<div class="g" style="left:202px;width:30.5px;text-align:right;top:502.70px;color:#151515;letter-spacing:-0.1px">493</div>
<div class="g" style="left:239px;top:502.70px;color:#151515;overflow:hidden;width:50px;letter-spacing:0px">13:21:13.679</div>
<div class="g" style="left:290px;top:502.70px;color:#151515;overflow:hidden;width:53px;letter-spacing:-0.2px">3</div>
<div class="g" style="left:346px;top:502.70px;color:#151515;overflow:hidden;width:34.5px;letter-spacing:-0.2px">3</div>
<div class="g" style="left:383.5px;top:502.70px;color:#151515;overflow:hidden;width:116.0px;letter-spacing:-0.2px">Test step started</div>
<div class="g" style="left:502.5px;top:502.70px;color:#151515;overflow:hidden;width:118.79999999999995px;letter-spacing:-0.2px">PowerOn.ChannelTests.Channel 1</div>
<div class="g" style="left:624.3px;top:502.70px;color:#151515;overflow:hidden;width:101.30000000000007px;letter-spacing:-0.2px">Channel 1 5V current</div>
<div style="left:201px;top:513.90px;width:584px;height:13.20px;background:#f6f4e4"></div>
<div style="left:234.5px;top:513.90px;width:1px;height:13.20px;background:#e2e2da"></div>
<div style="left:287.5px;top:513.90px;width:1px;height:13.20px;background:#e2e2da"></div>
<div style="left:343.5px;top:513.90px;width:1px;height:13.20px;background:#e2e2da"></div>
<div style="left:381.0px;top:513.90px;width:1px;height:13.20px;background:#e2e2da"></div>
<div style="left:500.0px;top:513.90px;width:1px;height:13.20px;background:#e2e2da"></div>
<div style="left:621.8px;top:513.90px;width:1px;height:13.20px;background:#e2e2da"></div>
<div style="left:726.1px;top:513.90px;width:1px;height:13.20px;background:#e2e2da"></div>
<div style="left:776.1px;top:513.90px;width:1px;height:13.20px;background:#e2e2da"></div>
<div style="left:201px;top:526.10px;width:584px;height:1px;background:#e2e2da"></div>
<div class="g" style="left:202px;width:30.5px;text-align:right;top:515.90px;color:#151515;letter-spacing:-0.1px">494</div>
<div class="g" style="left:239px;top:515.90px;color:#151515;overflow:hidden;width:50px;letter-spacing:0px">13:21:13.679</div>
<div class="g" style="left:290px;top:515.90px;color:#151515;overflow:hidden;width:53px;letter-spacing:-0.2px">3</div>
<div class="g" style="left:346px;top:515.90px;color:#151515;overflow:hidden;width:34.5px;letter-spacing:-0.2px">3</div>
<div class="g" style="left:383.5px;top:515.90px;color:#151515;overflow:hidden;width:116.0px;letter-spacing:-0.2px">Measure</div>
<div class="g" style="left:502.5px;top:515.90px;color:#151515;overflow:hidden;width:118.79999999999995px;letter-spacing:-0.2px">PowerOn.ChannelTests.Channel 1</div>
<div class="g" style="left:624.3px;top:515.90px;color:#151515;overflow:hidden;width:101.30000000000007px;letter-spacing:-0.2px">Channel 1 5V current</div>
<div style="left:785px;top:223px;width:12px;height:316px;background:#eceef2;border-left:1px solid #d8dbe1"></div>
<div style="left:785.5px;top:512px;width:9px;height:13px;background:linear-gradient(90deg,#f0f1f4,#dcdfe5);border:1px solid #b0b6c1;border-radius:1px"></div>
<div style="left:787.5px;top:516px;width:5px;height:1px;background:#7a8290;box-shadow:0 2px 0 #7a8290,0 4px 0 #7a8290"></div>
<div style="left:787px;top:227px;width:0;height:0;border-left:3px solid transparent;border-right:3px solid transparent;border-bottom:3px solid #666"></div>
<div style="left:787px;top:529.5px;width:0;height:0;border-left:3px solid transparent;border-right:3px solid transparent;border-top:3px solid #666"></div>
<div style="left:777px;top:541px;width:0;height:0;border-top:3px solid transparent;border-bottom:3px solid transparent;border-left:3px solid #666"></div>
<div style="left:204px;top:541px;width:0;height:0;border-top:3px solid transparent;border-bottom:3px solid transparent;border-right:3px solid #888"></div>
<div style="left:201px;top:539px;width:584px;height:11px;background:#eceef2;border-top:1px solid #d8dbe1"></div>
<div style="left:213px;top:540px;width:340px;height:9px;background:linear-gradient(#f4f5f7,#dcdfe5);border:1px solid #aab1bd;border-radius:2px"></div>
<div style="left:785px;top:538.5px;width:11px;height:11px;background:#cdd1d9"></div>
<div style="left:200px;top:557px;width:597px;height:15px;background:linear-gradient(#4a5d80,#3a4c70)"></div>
<div style="left:204px;top:559.5px;font-size:8.5px;font-weight:bold;color:#e8ecf4">Current test step</div>
<div style="left:786px;top:559px;font-size:8px;color:#e8ecf4">&#8224;</div>
<div style="left:201px;top:571.5px;width:596px;height:14.5px;background:linear-gradient(#f7f8fa,#e5e7ec)"></div>
<div style="left:201px;top:571.5px;width:74px;height:14.5px;border-right:1px solid #d5d8de"></div>
<div class="g" style="left:203px;top:574px;color:#5c6068;-webkit-text-stroke:0">Number</div>
<div style="left:275px;top:571.5px;width:75px;height:14.5px;border-right:1px solid #d5d8de"></div>
<div class="g" style="left:277px;top:574px;color:#5c6068;-webkit-text-stroke:0">DUT status</div>
<div style="left:350px;top:571.5px;width:156px;height:14.5px;border-right:1px solid #d5d8de"></div>
<div class="g" style="left:352px;top:574px;color:#5c6068;-webkit-text-stroke:0">Description</div>
<div style="left:506px;top:571.5px;width:57px;height:14.5px;border-right:1px solid #d5d8de"></div>
<div class="g" style="left:508px;top:574px;color:#5c6068;-webkit-text-stroke:0">Lower limit</div>
<div style="left:563px;top:571.5px;width:57px;height:14.5px;border-right:1px solid #d5d8de"></div>
<div class="g" style="left:565px;top:574px;color:#5c6068;-webkit-text-stroke:0">Upper limit</div>
<div style="left:620px;top:571.5px;width:56px;height:14.5px;border-right:1px solid #d5d8de"></div>
<div class="g" style="left:622px;top:574px;color:#5c6068;-webkit-text-stroke:0">Value</div>
<div style="left:676px;top:571.5px;width:56px;height:14.5px;border-right:1px solid #d5d8de"></div>
<div class="g" style="left:678px;top:574px;color:#5c6068;-webkit-text-stroke:0">Unit</div>
<div style="left:732px;top:571.5px;width:65px;height:14.5px;border-right:1px solid #d5d8de"></div>
<div class="g" style="left:734px;top:574px;color:#5c6068;-webkit-text-stroke:0">Result</div>
<div style="left:201px;top:586.00px;width:74px;height:18.80px;background:#5aae3c;border-right:1px solid #8fd07a;border-bottom:1px solid #8fd07a"></div>
<div style="left:201px;width:72px;text-align:right;top:587.80px;font-size:13.4px;color:#111">1</div>
<div style="left:275px;top:586.00px;width:75px;height:18.80px;background:#5aae3c;border-right:1px solid #8fd07a;border-bottom:1px solid #8fd07a"></div>
<div style="left:278.5px;top:587.80px;font-size:13.4px;color:#111;letter-spacing:0px">Pass</div>
<div style="left:350px;top:586.00px;width:156px;height:18.80px;background:#5aae3c;border-right:1px solid #8fd07a;border-bottom:1px solid #8fd07a"></div>
<div style="left:353.5px;top:587.80px;font-size:13.4px;color:#111;letter-spacing:0px">Switch external power off</div>
<div style="left:506px;top:586.00px;width:57px;height:18.80px;background:#5aae3c;border-right:1px solid #8fd07a;border-bottom:1px solid #8fd07a"></div>
<div style="left:509.5px;top:587.80px;font-size:13.4px;color:#111;letter-spacing:0px">0</div>
<div style="left:563px;top:586.00px;width:57px;height:18.80px;background:#5aae3c;border-right:1px solid #8fd07a;border-bottom:1px solid #8fd07a"></div>
<div style="left:566.5px;top:587.80px;font-size:13.4px;color:#111;letter-spacing:0px">0</div>
<div style="left:620px;top:586.00px;width:56px;height:18.80px;background:#5aae3c;border-right:1px solid #8fd07a;border-bottom:1px solid #8fd07a"></div>
<div style="left:623.5px;top:587.80px;font-size:13.4px;color:#111;letter-spacing:0px">0</div>
<div style="left:676px;top:586.00px;width:56px;height:18.80px;background:#5aae3c;border-right:1px solid #8fd07a;border-bottom:1px solid #8fd07a"></div>
<div style="left:732px;top:586.00px;width:65px;height:18.80px;background:#5aae3c;border-right:1px solid #8fd07a;border-bottom:1px solid #8fd07a"></div>
<div style="left:735.5px;top:587.80px;font-size:13.4px;color:#111;letter-spacing:0px">Pass</div>
<div style="left:201px;top:604.80px;width:74px;height:18.80px;background:#5aae3c;border-right:1px solid #8fd07a;border-bottom:1px solid #8fd07a"></div>
<div style="left:201px;width:72px;text-align:right;top:606.60px;font-size:13.4px;color:#111">2</div>
<div style="left:275px;top:604.80px;width:75px;height:18.80px;background:#5aae3c;border-right:1px solid #8fd07a;border-bottom:1px solid #8fd07a"></div>
<div style="left:278.5px;top:606.60px;font-size:13.4px;color:#111;letter-spacing:0px">Pass</div>
<div style="left:350px;top:604.80px;width:156px;height:18.80px;background:#5aae3c;border-right:1px solid #8fd07a;border-bottom:1px solid #8fd07a"></div>
<div style="left:353.5px;top:606.60px;font-size:13.4px;color:#111;letter-spacing:0px">Switch external power off</div>
<div style="left:506px;top:604.80px;width:57px;height:18.80px;background:#5aae3c;border-right:1px solid #8fd07a;border-bottom:1px solid #8fd07a"></div>
<div style="left:509.5px;top:606.60px;font-size:13.4px;color:#111;letter-spacing:0px">0</div>
<div style="left:563px;top:604.80px;width:57px;height:18.80px;background:#5aae3c;border-right:1px solid #8fd07a;border-bottom:1px solid #8fd07a"></div>
<div style="left:566.5px;top:606.60px;font-size:13.4px;color:#111;letter-spacing:0px">0</div>
<div style="left:620px;top:604.80px;width:56px;height:18.80px;background:#5aae3c;border-right:1px solid #8fd07a;border-bottom:1px solid #8fd07a"></div>
<div style="left:623.5px;top:606.60px;font-size:13.4px;color:#111;letter-spacing:0px">0</div>
<div style="left:676px;top:604.80px;width:56px;height:18.80px;background:#5aae3c;border-right:1px solid #8fd07a;border-bottom:1px solid #8fd07a"></div>
<div style="left:732px;top:604.80px;width:65px;height:18.80px;background:#5aae3c;border-right:1px solid #8fd07a;border-bottom:1px solid #8fd07a"></div>
<div style="left:735.5px;top:606.60px;font-size:13.4px;color:#111;letter-spacing:0px">Pass</div>
<div style="left:201px;top:623.60px;width:74px;height:18.80px;background:#acd5e6;border-right:1px solid #d0e6ef;border-bottom:1px solid #d0e6ef"></div>
<div style="left:201px;width:72px;text-align:right;top:625.40px;font-size:13.4px;color:#111">3</div>
<div style="left:275px;top:623.60px;width:75px;height:18.80px;background:#acd5e6;border-right:1px solid #d0e6ef;border-bottom:1px solid #d0e6ef"></div>
<div style="left:278.5px;top:625.40px;font-size:13.4px;color:#111;letter-spacing:0px">Testing</div>
<div style="left:350px;top:623.60px;width:156px;height:18.80px;background:#5aae3c;border-right:1px solid #8fd07a;border-bottom:1px solid #8fd07a"></div>
<div style="left:353.5px;top:625.40px;font-size:13.4px;color:#111;letter-spacing:0px">Channel 1 5V current</div>
<div style="left:506px;top:623.60px;width:57px;height:18.80px;background:#5aae3c;border-right:1px solid #8fd07a;border-bottom:1px solid #8fd07a"></div>
<div style="left:509.5px;top:625.40px;font-size:13.4px;color:#111;letter-spacing:0px">0.98</div>
<div style="left:563px;top:623.60px;width:57px;height:18.80px;background:#5aae3c;border-right:1px solid #8fd07a;border-bottom:1px solid #8fd07a"></div>
<div style="left:566.5px;top:625.40px;font-size:13.4px;color:#111;letter-spacing:0px">1.02</div>
<div style="left:620px;top:623.60px;width:56px;height:18.80px;background:#5aae3c;border-right:1px solid #8fd07a;border-bottom:1px solid #8fd07a"></div>
<div style="left:623.5px;top:625.40px;font-size:13.4px;color:#111;letter-spacing:0px">0.998</div>
<div style="left:676px;top:623.60px;width:56px;height:18.80px;background:#5aae3c;border-right:1px solid #8fd07a;border-bottom:1px solid #8fd07a"></div>
<div style="left:679.5px;top:625.40px;font-size:13.4px;color:#111;letter-spacing:0px">A</div>
<div style="left:732px;top:623.60px;width:65px;height:18.80px;background:#5aae3c;border-right:1px solid #8fd07a;border-bottom:1px solid #8fd07a"></div>
<div style="left:735.5px;top:625.40px;font-size:13.4px;color:#111;letter-spacing:0px">Pass</div>
<div style="left:201px;top:642.40px;width:74px;height:18.80px;background:#fcf7e1;border-right:1px solid #e6e2cc;border-bottom:1px solid #e6e2cc"></div>
<div style="left:201px;width:72px;text-align:right;top:644.20px;font-size:13.4px;color:#111">4</div>
<div style="left:275px;top:642.40px;width:75px;height:18.80px;background:#fcf7e1;border-right:1px solid #e6e2cc;border-bottom:1px solid #e6e2cc"></div>
<div style="left:278.5px;top:644.20px;font-size:13.4px;color:#111;letter-spacing:0px">Waiting</div>
<div style="left:350px;top:642.40px;width:156px;height:18.80px;background:#fcf7e1;border-right:1px solid #e6e2cc;border-bottom:1px solid #e6e2cc"></div>
<div style="left:506px;top:642.40px;width:57px;height:18.80px;background:#fcf7e1;border-right:1px solid #e6e2cc;border-bottom:1px solid #e6e2cc"></div>
<div style="left:563px;top:642.40px;width:57px;height:18.80px;background:#fcf7e1;border-right:1px solid #e6e2cc;border-bottom:1px solid #e6e2cc"></div>
<div style="left:620px;top:642.40px;width:56px;height:18.80px;background:#fcf7e1;border-right:1px solid #e6e2cc;border-bottom:1px solid #e6e2cc"></div>
<div style="left:676px;top:642.40px;width:56px;height:18.80px;background:#fcf7e1;border-right:1px solid #e6e2cc;border-bottom:1px solid #e6e2cc"></div>
<div style="left:732px;top:642.40px;width:65px;height:18.80px;background:#fcf7e1;border-right:1px solid #e6e2cc;border-bottom:1px solid #e6e2cc"></div>
<div style="left:735.5px;top:644.20px;font-size:13.4px;color:#111;letter-spacing:0px">Interme...</div>
<div style="left:206px;top:669px;font-size:8.3px;color:#d8dde8;letter-spacing:-0.2px">Last test step</div>
<div style="left:267px;top:669px;font-size:8px;color:#d8dde8;letter-spacing:-0.2px">Test progress</div>
<div style="left:199px;top:681px;width:599px;height:2px;background:#f5e6a6"></div>
<div style="left:803px;top:96px;width:422px;height:16px;background:linear-gradient(#33456a,#4b5e84 45%,#42557a)"></div>
<div style="left:806px;top:100px;width:9px;height:8px;background:linear-gradient(#f4f6fa,#c9d2e2);border:1px solid #e8ecf3"></div>
<div style="left:818px;top:99px;font-size:8.5px;font-weight:bold;color:#eef1f7;letter-spacing:-0.1px">Power supply</div>
<div style="left:1188px;top:102px;width:6px;height:5px;border:1.5px solid #e6eaf2"></div>
<svg style="position:absolute;left:1200px;top:100px" width="24" height="9" viewBox="0 0 24 9"><path d="M1.5 3.5 H7.5 M4.5 1 V8.5 M2.5 1 H6.5" stroke="#e6eaf2" stroke-width="1.3" fill="none"/><path d="M14 1.5 L20 7.5 M20 1.5 L14 7.5" stroke="#e6eaf2" stroke-width="1.6"/></svg>
<div style="left:803px;top:112px;width:422px;height:277px;background:#bdc6d7"></div>
<div style="left:806px;top:114.5px;width:206px;height:177.5px;background:#000;border:2px solid #e3e6ec;outline:1px solid #9aa3b3"></div>
<div style="left:1017px;top:114.5px;width:205.5px;height:176.5px;background:#000;border:2px solid #e3e6ec;outline:1px solid #9aa3b3"></div>
<div style="left:806px;top:293.5px;width:206px;height:19px;background:#000;border:2px solid #e3e6ec;outline:1px solid #9aa3b3"></div>
<div style="left:806px;width:206px;text-align:center;top:296.5px;font-size:11px;font-weight:bold;color:#f2f2f2">4.996 V</div>
<div style="left:1017px;top:293.5px;width:205.5px;height:19px;background:#000;border:2px solid #e3e6ec;outline:1px solid #9aa3b3"></div>
<div style="left:1017px;width:205.5px;text-align:center;top:296.5px;font-size:11px;font-weight:bold;color:#f2f2f2">0.998 A</div>
<div style="left:806.5px;top:319.5px;width:141px;height:17px;background:#c7cdda;border-top:1px solid #9ea6b6;border-left:1px solid #9ea6b6;border-bottom:1px solid #e8ebf1"></div>
<div style="left:810.5px;top:320.5px;font-size:11.5px;color:#141c2c;-webkit-text-stroke:0.35px currentColor">Aim power</div>
<div style="left:950.5px;top:319.5px;width:31px;height:17px;background:#000;border:1px solid #8a93a3"></div>
<div style="left:950.5px;width:30px;text-align:right;top:322px;font-size:10px;font-weight:bold;color:#f0f0f0;letter-spacing:-0.3px">5.000</div>
<div style="left:981.5px;top:319.5px;width:11px;height:17px;background:linear-gradient(#f3f4f6,#d6d9df);border:1px solid #9aa2b0"></div>
<div style="left:984.0px;top:322px;width:0;height:0;border-left:3px solid transparent;border-right:3px solid transparent;border-bottom:3px solid #444"></div>
<div style="left:984.0px;top:330px;width:0;height:0;border-left:3px solid transparent;border-right:3px solid transparent;border-top:3px solid #444"></div>
<div style="left:996.0px;top:319.5px;width:15px;height:17px;background:#c7cdda;border-top:1px solid #9ea6b6;border-left:1px solid #9ea6b6"></div>
<div style="left:996.0px;width:15px;text-align:center;top:320.5px;font-size:11.5px;font-weight:bold;color:#1a2233">V</div>
<div style="left:1017px;top:319.5px;width:141px;height:17px;background:#c7cdda;border-top:1px solid #9ea6b6;border-left:1px solid #9ea6b6;border-bottom:1px solid #e8ebf1"></div>
<div style="left:1021px;top:320.5px;font-size:11.5px;color:#141c2c;-webkit-text-stroke:0.35px currentColor">Current</div>
<div style="left:1161px;top:319.5px;width:31px;height:17px;background:#000;border:1px solid #8a93a3"></div>
<div style="left:1161px;width:30px;text-align:right;top:322px;font-size:10px;font-weight:bold;color:#f0f0f0;letter-spacing:-0.3px">1.000</div>
<div style="left:1192px;top:319.5px;width:11px;height:17px;background:linear-gradient(#f3f4f6,#d6d9df);border:1px solid #9aa2b0"></div>
<div style="left:1194.5px;top:322px;width:0;height:0;border-left:3px solid transparent;border-right:3px solid transparent;border-bottom:3px solid #444"></div>
<div style="left:1194.5px;top:330px;width:0;height:0;border-left:3px solid transparent;border-right:3px solid transparent;border-top:3px solid #444"></div>
<div style="left:1206.5px;top:319.5px;width:15px;height:17px;background:#c7cdda;border-top:1px solid #9ea6b6;border-left:1px solid #9ea6b6"></div>
<div style="left:1206.5px;width:15px;text-align:center;top:320.5px;font-size:11.5px;font-weight:bold;color:#1a2233">A</div>
<div style="left:813px;top:347.5px;width:192px;height:2.5px;background:#e9ecf1;border-top:1px solid #a9b1bf"></div>
<div style="left:851px;top:343px;width:9px;height:10px;background:linear-gradient(90deg,#5b95d6,#2f6fb8);border-radius:1px"></div>
<div style="left:851px;top:352.5px;width:0;height:0;border-left:4.5px solid transparent;border-right:4.5px solid transparent;border-top:4px solid #2f6fb8"></div>
<div style="left:1023px;top:347.5px;width:192px;height:2.5px;background:#e9ecf1;border-top:1px solid #a9b1bf"></div>
<div style="left:1042px;top:343px;width:9px;height:10px;background:linear-gradient(90deg,#5b95d6,#2f6fb8);border-radius:1px"></div>
<div style="left:1042px;top:352.5px;width:0;height:0;border-left:4.5px solid transparent;border-right:4.5px solid transparent;border-top:4px solid #2f6fb8"></div>
<div style="left:806.5px;top:362.5px;width:22.5px;height:22.5px;border-radius:50%;background:radial-gradient(circle at 50% 45%,#f2f58a,#b8dd2a 35%,#5a9a10 75%,#2f5a0a);border:1px solid #2d4a18"></div>
<div style="left:833.5px;top:364px;width:177.0px;height:20px;background:#fafbfc;border:1px solid #dfe3ea"></div>
<div style="left:833.5px;width:177.0px;text-align:center;top:366.5px;font-size:11.5px;font-weight:bold;color:#222">Output on</div>
<div style="left:1018px;top:364px;width:203px;height:20px;background:#fafbfc;border:1px solid #dfe3ea"></div>
<div style="left:1018px;width:203px;text-align:center;top:366.5px;font-size:11.5px;font-weight:bold;color:#222">Output off</div>
<svg style="position:absolute;left:0;top:0" width="1280" height="721" viewBox="0 0 1280 721"><path d="M838.98,258.15 A80.5,80.5 0 1 1 978.42,258.15" fill="none" stroke="#e8e8e8" stroke-width="1.6"/><line x1="843.75" y1="255.40" x2="834.22" y2="260.90" stroke="#e8e8e8" stroke-width="1.8"/><line x1="834.99" y1="241.85" x2="829.29" y2="243.70" stroke="#e8e8e8" stroke-width="1"/><line x1="831.62" y1="226.00" x2="825.66" y2="226.63" stroke="#e8e8e8" stroke-width="1"/><line x1="831.62" y1="209.80" x2="825.66" y2="209.17" stroke="#e8e8e8" stroke-width="1"/><line x1="834.99" y1="193.95" x2="829.29" y2="192.10" stroke="#e8e8e8" stroke-width="1"/><line x1="843.75" y1="180.40" x2="834.22" y2="174.90" stroke="#e8e8e8" stroke-width="1.8"/><line x1="851.11" y1="166.04" x2="846.65" y2="162.03" stroke="#e8e8e8" stroke-width="1"/><line x1="863.15" y1="155.20" x2="859.62" y2="150.35" stroke="#e8e8e8" stroke-width="1"/><line x1="877.18" y1="147.10" x2="874.74" y2="141.62" stroke="#e8e8e8" stroke-width="1"/><line x1="892.59" y1="142.09" x2="891.34" y2="136.22" stroke="#e8e8e8" stroke-width="1"/><line x1="908.70" y1="142.90" x2="908.70" y2="131.90" stroke="#e8e8e8" stroke-width="1.8"/><line x1="924.81" y1="142.09" x2="926.06" y2="136.22" stroke="#e8e8e8" stroke-width="1"/><line x1="940.22" y1="147.10" x2="942.66" y2="141.62" stroke="#e8e8e8" stroke-width="1"/><line x1="954.25" y1="155.20" x2="957.78" y2="150.35" stroke="#e8e8e8" stroke-width="1"/><line x1="966.29" y1="166.04" x2="970.75" y2="162.03" stroke="#e8e8e8" stroke-width="1"/><line x1="973.65" y1="180.40" x2="983.18" y2="174.90" stroke="#e8e8e8" stroke-width="1.8"/><line x1="982.41" y1="193.95" x2="988.11" y2="192.10" stroke="#e8e8e8" stroke-width="1"/><line x1="985.78" y1="209.80" x2="991.74" y2="209.17" stroke="#e8e8e8" stroke-width="1"/><line x1="985.78" y1="226.00" x2="991.74" y2="226.63" stroke="#e8e8e8" stroke-width="1"/><line x1="982.41" y1="241.85" x2="988.11" y2="243.70" stroke="#e8e8e8" stroke-width="1"/><line x1="973.65" y1="255.40" x2="983.18" y2="260.90" stroke="#e8e8e8" stroke-width="1.8"/><text x="826.43" y="267.20" text-anchor="middle" font-size="8" fill="#e6e6e6" font-family="Liberation Sans">0</text><text x="826.43" y="172.20" text-anchor="middle" font-size="8" fill="#e6e6e6" font-family="Liberation Sans">10</text><text x="908.70" y="124.70" text-anchor="middle" font-size="8" fill="#e6e6e6" font-family="Liberation Sans">20</text><text x="990.97" y="172.20" text-anchor="middle" font-size="8" fill="#e6e6e6" font-family="Liberation Sans">30</text><text x="990.97" y="267.20" text-anchor="middle" font-size="8" fill="#e6e6e6" font-family="Liberation Sans">40</text><text x="908.7" y="166.9" text-anchor="middle" font-size="8" fill="#c8d0dc" font-family="Liberation Sans">Voltage</text><text x="908.7" y="184.9" text-anchor="middle" font-size="8" fill="#e6e6e6" font-family="Liberation Sans">V</text><path d="M835.90,227.60 L908.20,214.13 L909.20,221.67 Z" fill="#d42020"/><circle cx="908.7" cy="217.9" r="3.8" fill="#000" stroke="#eee" stroke-width="1.4"/><path d="M1050.38,258.25 A80.5,80.5 0 1 1 1189.82,258.25" fill="none" stroke="#e8e8e8" stroke-width="1.6"/><line x1="1055.15" y1="255.50" x2="1045.62" y2="261.00" stroke="#e8e8e8" stroke-width="1.8"/><line x1="1049.98" y1="251.00" x2="1044.55" y2="253.55" stroke="#e8e8e8" stroke-width="1"/><line x1="1047.46" y1="245.01" x2="1041.84" y2="247.11" stroke="#e8e8e8" stroke-width="1"/><line x1="1045.45" y1="238.84" x2="1039.68" y2="240.45" stroke="#e8e8e8" stroke-width="1"/><line x1="1043.97" y1="232.52" x2="1038.08" y2="233.65" stroke="#e8e8e8" stroke-width="1"/><line x1="1043.02" y1="226.10" x2="1037.06" y2="226.73" stroke="#e8e8e8" stroke-width="1"/><line x1="1042.62" y1="219.62" x2="1036.62" y2="219.75" stroke="#e8e8e8" stroke-width="1"/><line x1="1042.75" y1="213.13" x2="1036.76" y2="212.76" stroke="#e8e8e8" stroke-width="1"/><line x1="1043.43" y1="206.68" x2="1037.50" y2="205.80" stroke="#e8e8e8" stroke-width="1"/><line x1="1044.65" y1="200.30" x2="1038.81" y2="198.93" stroke="#e8e8e8" stroke-width="1"/><line x1="1048.77" y1="194.82" x2="1038.31" y2="191.42" stroke="#e8e8e8" stroke-width="1.8"/><line x1="1048.66" y1="187.97" x2="1043.12" y2="185.64" stroke="#e8e8e8" stroke-width="1"/><line x1="1051.42" y1="182.09" x2="1046.10" y2="179.31" stroke="#e8e8e8" stroke-width="1"/><line x1="1054.66" y1="176.47" x2="1049.60" y2="173.26" stroke="#e8e8e8" stroke-width="1"/><line x1="1058.37" y1="171.14" x2="1053.59" y2="167.52" stroke="#e8e8e8" stroke-width="1"/><line x1="1062.51" y1="166.14" x2="1058.05" y2="162.13" stroke="#e8e8e8" stroke-width="1"/><line x1="1067.05" y1="161.50" x2="1062.94" y2="157.13" stroke="#e8e8e8" stroke-width="1"/><line x1="1071.96" y1="157.26" x2="1068.23" y2="152.56" stroke="#e8e8e8" stroke-width="1"/><line x1="1077.21" y1="153.45" x2="1073.89" y2="148.45" stroke="#e8e8e8" stroke-width="1"/><line x1="1082.76" y1="150.09" x2="1079.87" y2="144.83" stroke="#e8e8e8" stroke-width="1"/><line x1="1089.59" y1="149.48" x2="1085.12" y2="139.44" stroke="#e8e8e8" stroke-width="1.8"/><line x1="1094.61" y1="144.81" x2="1092.64" y2="139.14" stroke="#e8e8e8" stroke-width="1"/><line x1="1100.83" y1="142.93" x2="1099.33" y2="137.12" stroke="#e8e8e8" stroke-width="1"/><line x1="1107.18" y1="141.59" x2="1106.17" y2="135.67" stroke="#e8e8e8" stroke-width="1"/><line x1="1113.61" y1="140.77" x2="1113.11" y2="134.79" stroke="#e8e8e8" stroke-width="1"/><line x1="1120.10" y1="140.50" x2="1120.10" y2="134.50" stroke="#e8e8e8" stroke-width="1"/><line x1="1126.59" y1="140.77" x2="1127.09" y2="134.79" stroke="#e8e8e8" stroke-width="1"/><line x1="1133.02" y1="141.59" x2="1134.03" y2="135.67" stroke="#e8e8e8" stroke-width="1"/><line x1="1139.37" y1="142.93" x2="1140.87" y2="137.12" stroke="#e8e8e8" stroke-width="1"/><line x1="1145.59" y1="144.81" x2="1147.56" y2="139.14" stroke="#e8e8e8" stroke-width="1"/><line x1="1150.61" y1="149.48" x2="1155.08" y2="139.44" stroke="#e8e8e8" stroke-width="1.8"/><line x1="1157.44" y1="150.09" x2="1160.33" y2="144.83" stroke="#e8e8e8" stroke-width="1"/><line x1="1162.99" y1="153.45" x2="1166.31" y2="148.45" stroke="#e8e8e8" stroke-width="1"/><line x1="1168.24" y1="157.26" x2="1171.97" y2="152.56" stroke="#e8e8e8" stroke-width="1"/><line x1="1173.15" y1="161.50" x2="1177.26" y2="157.13" stroke="#e8e8e8" stroke-width="1"/><line x1="1177.69" y1="166.14" x2="1182.15" y2="162.13" stroke="#e8e8e8" stroke-width="1"/><line x1="1181.83" y1="171.14" x2="1186.61" y2="167.52" stroke="#e8e8e8" stroke-width="1"/><line x1="1185.54" y1="176.47" x2="1190.60" y2="173.26" stroke="#e8e8e8" stroke-width="1"/><line x1="1188.78" y1="182.09" x2="1194.10" y2="179.31" stroke="#e8e8e8" stroke-width="1"/><line x1="1191.54" y1="187.97" x2="1197.08" y2="185.64" stroke="#e8e8e8" stroke-width="1"/><line x1="1191.43" y1="194.82" x2="1201.89" y2="191.42" stroke="#e8e8e8" stroke-width="1.8"/><line x1="1195.55" y1="200.30" x2="1201.39" y2="198.93" stroke="#e8e8e8" stroke-width="1"/><line x1="1196.77" y1="206.68" x2="1202.70" y2="205.80" stroke="#e8e8e8" stroke-width="1"/><line x1="1197.45" y1="213.13" x2="1203.44" y2="212.76" stroke="#e8e8e8" stroke-width="1"/><line x1="1197.58" y1="219.62" x2="1203.58" y2="219.75" stroke="#e8e8e8" stroke-width="1"/><line x1="1197.18" y1="226.10" x2="1203.14" y2="226.73" stroke="#e8e8e8" stroke-width="1"/><line x1="1196.23" y1="232.52" x2="1202.12" y2="233.65" stroke="#e8e8e8" stroke-width="1"/><line x1="1194.75" y1="238.84" x2="1200.52" y2="240.45" stroke="#e8e8e8" stroke-width="1"/><line x1="1192.74" y1="245.01" x2="1198.36" y2="247.11" stroke="#e8e8e8" stroke-width="1"/><line x1="1190.22" y1="251.00" x2="1195.65" y2="253.55" stroke="#e8e8e8" stroke-width="1"/><line x1="1185.05" y1="255.50" x2="1194.58" y2="261.00" stroke="#e8e8e8" stroke-width="1.8"/><text x="1037.83" y="267.30" text-anchor="middle" font-size="8" fill="#e6e6e6" font-family="Liberation Sans">0</text><text x="1029.75" y="190.44" text-anchor="middle" font-size="8" fill="#e6e6e6" font-family="Liberation Sans">2</text><text x="1081.46" y="133.01" text-anchor="middle" font-size="8" fill="#e6e6e6" font-family="Liberation Sans">4</text><text x="1158.74" y="133.01" text-anchor="middle" font-size="8" fill="#e6e6e6" font-family="Liberation Sans">6</text><text x="1210.45" y="190.44" text-anchor="middle" font-size="8" fill="#e6e6e6" font-family="Liberation Sans">8</text><text x="1202.37" y="267.30" text-anchor="middle" font-size="8" fill="#e6e6e6" font-family="Liberation Sans">10</text><text x="1120.1" y="167" text-anchor="middle" font-size="8" fill="#c8d0dc" font-family="Liberation Sans">Current</text><text x="1120.1" y="185" text-anchor="middle" font-size="8" fill="#e6e6e6" font-family="Liberation Sans">A</text><path d="M1049.50,240.40 L1118.95,214.38 L1121.25,221.62 Z" fill="#d42020"/><circle cx="1120.1" cy="218" r="3.8" fill="#000" stroke="#eee" stroke-width="1.4"/></svg>
<div style="left:803px;top:392px;width:422px;height:16px;background:linear-gradient(#33456a,#4b5e84 45%,#42557a)"></div>
<div style="left:806px;top:396px;width:9px;height:8px;background:linear-gradient(#f4f6fa,#c9d2e2);border:1px solid #e8ecf3"></div>
<div style="left:818px;top:395px;font-size:8.5px;font-weight:bold;color:#eef1f7;letter-spacing:-0.1px">Power supply test results</div>
<div style="left:1188px;top:398px;width:6px;height:5px;border:1.5px solid #e6eaf2"></div>
<svg style="position:absolute;left:1200px;top:396px" width="24" height="9" viewBox="0 0 24 9"><path d="M1.5 3.5 H7.5 M4.5 1 V8.5 M2.5 1 H6.5" stroke="#e6eaf2" stroke-width="1.3" fill="none"/><path d="M14 1.5 L20 7.5 M20 1.5 L14 7.5" stroke="#e6eaf2" stroke-width="1.6"/></svg>
<div style="left:803px;top:408px;width:422px;height:275px;background:#bdc6d7"></div>
<div style="left:804px;top:409px;width:420px;height:273px;background:#ccd6de"></div>
<div style="left:805.0px;top:410.0px;width:208px;height:133.5px;background:#5aae3c;border:1px solid #4f8a3a"></div>
<div style="left:805.0px;width:208px;text-align:center;top:425.0px;font-size:15px;color:#1a3d12">DUT 1</div>
<div style="left:805.0px;width:208px;text-align:center;top:453.0px;font-size:10.8px;letter-spacing:0.1px;color:#163a0e">PS0001_001</div>
<div style="left:805.0px;width:208px;text-align:center;top:469.0px;font-size:10.8px;letter-spacing:0.1px;color:#163a0e">PS0001</div>
<div style="left:805.0px;width:208px;text-align:center;top:485.0px;font-size:11px;letter-spacing:0.3px;color:#163a0e">Power supply 1</div>
<div style="left:805.0px;width:208px;text-align:center;top:505.5px;font-size:14px;color:#1a3d12">Pass</div>
<div style="left:1015.0px;top:410.0px;width:208px;height:133.5px;background:#5aae3c;border:1px solid #4f8a3a"></div>
<div style="left:1015.0px;width:208px;text-align:center;top:425.0px;font-size:15px;color:#1a3d12">DUT 2</div>
<div style="left:1015.0px;width:208px;text-align:center;top:453.0px;font-size:10.8px;letter-spacing:0.1px;color:#163a0e">PS0001_002</div>
<div style="left:1015.0px;width:208px;text-align:center;top:469.0px;font-size:10.8px;letter-spacing:0.1px;color:#163a0e">PS0001</div>
<div style="left:1015.0px;width:208px;text-align:center;top:485.0px;font-size:11px;letter-spacing:0.3px;color:#163a0e">Power supply 1</div>
<div style="left:1015.0px;width:208px;text-align:center;top:505.5px;font-size:14px;color:#1a3d12">Pass</div>
<div style="left:805.0px;top:545.5px;width:208px;height:133.5px;background:#acd5e6;border:1px solid #8a9cb0"></div>
<div style="left:805.0px;width:208px;text-align:center;top:560.5px;font-size:15px;color:#1a1a1a">DUT 3</div>
<div style="left:805.0px;width:208px;text-align:center;top:588.5px;font-size:10.8px;letter-spacing:0.1px;color:#1a1a1a">PS0001_003</div>
<div style="left:805.0px;width:208px;text-align:center;top:604.5px;font-size:10.8px;letter-spacing:0.1px;color:#1a1a1a">PS0001</div>
<div style="left:805.0px;width:208px;text-align:center;top:620.5px;font-size:11px;letter-spacing:0.3px;color:#1a1a1a">Power supply 1</div>
<div style="left:805.0px;width:208px;text-align:center;top:641px;font-size:14px;color:#1a1a1a">Testing</div>
<div style="left:1015.0px;top:545.5px;width:208px;height:133.5px;background:#fcf7e1;border:1px solid #a8a898"></div>
<div style="left:1015.0px;width:208px;text-align:center;top:560.5px;font-size:15px;color:#1a1a1a">DUT 4</div>
<div style="left:1015.0px;width:208px;text-align:center;top:588.5px;font-size:10.8px;letter-spacing:0.1px;color:#1a1a1a">PS0001_004</div>
<div style="left:1015.0px;width:208px;text-align:center;top:604.5px;font-size:10.8px;letter-spacing:0.1px;color:#1a1a1a">PS0001</div>
<div style="left:1015.0px;width:208px;text-align:center;top:620.5px;font-size:11px;letter-spacing:0.3px;color:#1a1a1a">Power supply 1</div>
<div style="left:1015.0px;width:208px;text-align:center;top:641px;font-size:14px;color:#1a1a1a">Waiting</div>
<div style="left:61px;top:31px;width:12px;height:1.3px;background:#4a5366"></div>
<div style="left:61px;top:34px;width:12px;height:1.3px;background:#4a5366"></div>
<div style="left:61px;top:37px;width:12px;height:1.3px;background:#4a5366"></div>
<svg style="position:absolute;left:88px;top:28px" width="16" height="16" viewBox="0 0 16 16"><circle cx="10.5" cy="6.5" r="4.3" fill="#d6dbe6" stroke="#6b7488" stroke-width="1.3"/><line x1="7.5" y1="9.5" x2="2.5" y2="14.5" stroke="#6b7488" stroke-width="1.6"/></svg>
<div style="left:108.5px;top:31.5px;font-size:8px;color:#9098a8;letter-spacing:-0.2px">Type keywords here</div>
<svg style="position:absolute;left:62px;top:51.0px" width="22" height="22" viewBox="0 0 22 22"><rect x="0" y="4" width="11" height="11" rx="1" fill="#b8622a"/><rect x="0" y="4" width="11" height="4" fill="#d98a45"/><rect x="3" y="2" width="5" height="2" fill="none" stroke="#7a4018" stroke-width="1"/><path d="M7 3 H15 L19 7 V21 H7 Z" fill="#f4f6fa" stroke="#cfd4dc" stroke-width="0.6"/><path d="M15 3 V7 H19" fill="#dfe3ea"/></svg>
<svg style="position:absolute;left:62px;top:81.0px" width="22" height="22" viewBox="0 0 22 22"><circle cx="9" cy="7" r="5" fill="#f2cc98"/><path d="M4 6 Q9 0 14 6 L14 4 Q9 -1 4 4 Z" fill="#8a5a2a"/><path d="M2 22 Q2 13 9 12 Q16 13 16 22 Z" fill="#9a2020"/><path d="M7 13 L9 17 L11 13 Z" fill="#f0f0f0"/><circle cx="15" cy="16" r="3" fill="none" stroke="#f0c050" stroke-width="1.5"/><line x1="13" y1="18" x2="10" y2="21" stroke="#f0c050" stroke-width="1.5"/></svg>
<svg style="position:absolute;left:62px;top:111.0px" width="22" height="22" viewBox="0 0 22 22"><g transform="translate(10.5,11)"><path d="M-1.8,-10 L1.8,-10 L2.4,-7 L5,-8.3 L7.6,-5.8 L6.6,-3 L9.8,-2 L9.8,2 L6.6,3 L7.8,5.8 L5.2,8.4 L2.4,7 L1.8,10 L-1.8,10 L-2.4,7 L-5,8.4 L-7.6,5.8 L-6.6,3 L-9.8,2 L-9.8,-2 L-6.6,-3 L-7.6,-5.8 L-5,-8.3 L-2.4,-7 Z" fill="#dfe3ea" stroke="#aab2c0" stroke-width="0.6"/><circle r="3.6" fill="#3a4a6a"/></g></svg>
<svg style="position:absolute;left:62px;top:141.0px" width="22" height="22" viewBox="0 0 22 22"><rect x="1" y="4" width="3" height="3" fill="none" stroke="#e8d0d0" stroke-width="0.8"/><rect x="1" y="9" width="3" height="3" fill="none" stroke="#e8d0d0" stroke-width="0.8"/><rect x="1" y="14" width="3" height="3" fill="none" stroke="#e8d0d0" stroke-width="0.8"/><rect x="6" y="4" width="12" height="2.5" fill="none" stroke="#e6e9ef" stroke-width="1"/><rect x="6" y="9" width="12" height="2.5" fill="none" stroke="#e6e9ef" stroke-width="1"/><rect x="6" y="14" width="12" height="2.5" fill="none" stroke="#e6e9ef" stroke-width="1"/></svg>
<svg style="position:absolute;left:62px;top:171.0px" width="22" height="22" viewBox="0 0 22 22"><rect x="7.5" y="1" width="5" height="5" fill="#78b4e8" stroke="#c0dcf4" stroke-width="0.6"/><rect x="0" y="13" width="6" height="5" fill="#8cc43c"/><rect x="7.5" y="13" width="6" height="5" fill="#8cc43c"/><rect x="15" y="13" width="6" height="5" fill="#8cc43c"/></svg>
<svg style="position:absolute;left:62px;top:201.0px" width="22" height="22" viewBox="0 0 22 22"><line x1="3" y1="2" x2="3" y2="21" stroke="#d8dce4" stroke-width="1.2"/><path d="M3 3 Q10 2 20 7 Q12 9 10 14 Q7 11 3 12 Z" fill="#a8cc48"/></svg>
<svg style="position:absolute;left:62px;top:231.0px" width="22" height="22" viewBox="0 0 22 22"><rect x="1" y="1" width="12" height="16" fill="#f2f4f8" stroke="#c8ced8" stroke-width="0.6"/><rect x="3" y="4" width="8" height="1.3" fill="#b89a7a"/><rect x="3" y="7" width="8" height="1" fill="#aab"/><rect x="3" y="10" width="6" height="1" fill="#aab"/><path d="M10 9 Q15 7 19 9 V20 Q15 22 10 20 Z" fill="#e8b850"/><ellipse cx="14.5" cy="9" rx="4.5" ry="1.6" fill="#f6d890"/></svg>
<svg style="position:absolute;left:62px;top:261.0px" width="22" height="22" viewBox="0 0 22 22"><path d="M0 7 L9 3 L18 7 L18 17 L9 21 L0 17 Z" fill="#e8a828"/><path d="M0 7 L9 11 L18 7 L9 3 Z" fill="#f8d060"/><path d="M9 11 L9 21 L18 17 L18 7 Z" fill="#c88418"/><rect x="13" y="16" width="6" height="4" fill="#3a78c8"/></svg>
<svg style="position:absolute;left:62px;top:291.0px" width="22" height="22" viewBox="0 0 22 22"><rect x="3" y="2" width="14" height="19" rx="1" fill="#e8ebf0" stroke="#c0c6d0" stroke-width="0.8"/><rect x="7" y="1" width="6" height="3" fill="#b8c0cc"/><rect x="6" y="7" width="8" height="1" fill="#9aa4b4"/><rect x="6" y="10" width="8" height="1" fill="#9aa4b4"/><rect x="6" y="13" width="8" height="1" fill="#9aa4b4"/></svg>
<svg style="position:absolute;left:62px;top:321.0px" width="22" height="22" viewBox="0 0 22 22"><rect x="1" y="2" width="18" height="17" fill="#f4f6f2" stroke="#d0d4cc" stroke-width="0.6"/><text x="3" y="15" font-size="11" font-weight="bold" fill="#4a7a2a" font-family="Liberation Sans">C</text><text x="11" y="10" font-size="7" font-weight="bold" fill="#333" font-family="Liberation Sans">#</text></svg>
<svg style="position:absolute;left:62px;top:351.0px" width="22" height="22" viewBox="0 0 22 22"><rect x="1" y="2" width="18" height="17" fill="#f4f5f8" stroke="#d0d4dc" stroke-width="0.6"/><rect x="3.5" y="6" width="3" height="9" fill="none" stroke="#8a4a3a" stroke-width="1"/><circle cx="14" cy="6" r="1.5" fill="none" stroke="#555" stroke-width="0.8"/><circle cx="14" cy="10.5" r="1.5" fill="none" stroke="#555" stroke-width="0.8"/><circle cx="14" cy="15" r="1.5" fill="none" stroke="#555" stroke-width="0.8"/><path d="M7 10.5 H12 M9 6 V15 M9 6 H12 M9 15 H12" stroke="#555" stroke-width="0.7" fill="none"/></svg>
<svg style="position:absolute;left:62px;top:381.0px" width="22" height="22" viewBox="0 0 22 22"><path d="M1 17 A10 10 0 0 1 21 17 Z" fill="#e8eef6" stroke="#c8d0dc" stroke-width="0.8"/><path d="M3 17 A8 8 0 0 1 19 17" fill="none" stroke="#8ab8e0" stroke-width="2.2"/><path d="M16 12 A8 8 0 0 1 19 17" fill="none" stroke="#c83030" stroke-width="2.2"/><line x1="11" y1="17" x2="15" y2="11" stroke="#333" stroke-width="1.2"/></svg>
<svg style="position:absolute;left:62px;top:411.0px" width="22" height="22" viewBox="0 0 22 22"><path d="M10.5 1 L13.3 7.6 L20.5 8.2 L15 12.8 L16.7 19.8 L10.5 16 L4.3 19.8 L6 12.8 L0.5 8.2 L7.7 7.6 Z" fill="#6aa6e0" stroke="#a8cdf0" stroke-width="0.6"/></svg>
<svg style="position:absolute;left:62px;top:441.0px" width="22" height="22" viewBox="0 0 22 22"><rect x="1" y="1" width="12" height="15" fill="#eef1f6" stroke="#c8ced8" stroke-width="0.6"/><rect x="7" y="7" width="13" height="14" fill="#4a86d0" stroke="#9cc0e8" stroke-width="0.6"/><text x="10.5" y="18" font-size="11" font-weight="bold" fill="#fff" font-family="Liberation Sans">?</text></svg>
<svg style="position:absolute;left:265.5px;top:56px" width="14" height="14" viewBox="0 0 14 14"><circle cx="7" cy="7" r="5.6" fill="#c6dcee" stroke="#6a94bc" stroke-width="1.3"/><path d="M5.6 4.4 L9.8 7 L5.6 9.6 Z" fill="#4a84bc"/><circle cx="6.6" cy="7" r="1.2" fill="#e8f4fc"/></svg>
<svg style="position:absolute;left:411.7px;top:56px" width="14" height="14" viewBox="0 0 14 14"><rect x="2.5" y="2" width="9" height="8.5" fill="#dfe8f2" stroke="#6a7a90" stroke-width="1"/><circle cx="7" cy="6.3" r="2" fill="none" stroke="#5a6a80" stroke-width="0.9"/><path d="M5 10.5 L9 12.5 L11 11" fill="none" stroke="#6a7280" stroke-width="1.2"/></svg>
<svg style="position:absolute;left:557.9px;top:56px" width="14" height="14" viewBox="0 0 14 14"><path d="M3.5 2 H10 V10 L7 13 H3.5 Z" fill="#f8f8f6" stroke="#9a9a9a" stroke-width="0.7"/><path d="M6 12.5 L11.5 6.5 L13 8 L7.5 13.8 Z" fill="#d8b050" stroke="#8a7030" stroke-width="0.5"/></svg>
<svg style="position:absolute;left:704.1px;top:56px" width="14" height="14" viewBox="0 0 14 14"><rect x="2.5" y="4.5" width="8" height="7.5" fill="#e8eef4" stroke="#8a98a8" stroke-width="0.8"/><line x1="2" y1="12.6" x2="10.5" y2="12.6" stroke="#333" stroke-width="1.1"/><path d="M6 10 L11.5 3.5" stroke="#555" stroke-width="1.3"/><circle cx="11.8" cy="3.2" r="1" fill="#c05050"/></svg>
<svg style="position:absolute;left:850.3px;top:56px" width="14" height="14" viewBox="0 0 14 14"><path d="M2 9 Q5 6 8.5 7.5" fill="none" stroke="#6a6a6a" stroke-width="0.9"/><circle cx="10" cy="7.6" r="1.4" fill="#e8e8e8" stroke="#555" stroke-width="0.8"/></svg>
<svg style="position:absolute;left:996.5px;top:56px" width="14" height="14" viewBox="0 0 14 14"><circle cx="7" cy="7" r="5.5" fill="#a8d068" stroke="#6a9a3a" stroke-width="1"/><path d="M5 7.5 A2.3 2.3 0 1 0 7.2 4.7" fill="none" stroke="#4a7a2a" stroke-width="1"/><circle cx="7" cy="7" r="2.2" fill="#c8e898" opacity="0.6"/></svg>
<svg style="position:absolute;left:1142.7px;top:56px" width="14" height="14" viewBox="0 0 14 14"><rect x="2.5" y="2.5" width="9.5" height="9.5" fill="#e07868" stroke="#9a4a40" stroke-width="0.9"/><path d="M4.8 4.8 L9.7 9.7 M9.7 4.8 L4.8 9.7" stroke="#fff" stroke-width="1.4"/></svg>
<div style="left:707px;top:92.5px;width:1.5px;height:1.5px;background:#6a7488"></div>
<div style="left:710px;top:92.5px;width:1.5px;height:1.5px;background:#6a7488"></div>
<div style="left:713px;top:92.5px;width:1.5px;height:1.5px;background:#6a7488"></div>
<div style="left:716px;top:92.5px;width:1.5px;height:1.5px;background:#6a7488"></div>
<div style="left:1227px;top:22px;width:6px;height:689px;background:linear-gradient(#eef0f4,#e0e4ea 15%,#dde1e8)"></div>
<div style="left:53px;top:705px;width:1180px;height:6px;background:#e3e8f0"></div>
<div style="left:1231px;top:77px;width:2.5px;height:21px;background:#4a7a9a"></div>
<div style="left:53px;top:684.5px;width:1174px;height:20.5px;background:#2b3a5b"></div>
<div style="left:57.5px;top:689.5px;font-size:9px;font-weight:bold;color:#eef1f6;letter-spacing:-0.2px">User level</div>
<div style="left:104.5px;top:690px;font-size:8.5px;color:#c8d0de;letter-spacing:-0.2px">User</div>
<div style="left:126px;top:687px;width:1px;height:16px;background:#4e5e7e"></div>
<div style="left:132px;top:689.5px;font-size:9px;font-weight:bold;color:#eef1f6;letter-spacing:-0.2px">Status</div>
<svg style="position:absolute;left:167px;top:690px" width="10" height="10" viewBox="0 0 10 10"><circle cx="5" cy="5" r="4.2" fill="#3a5080" stroke="#dfe6f2" stroke-width="1.2"/><circle cx="5" cy="2.9" r="0.8" fill="#eef2f8"/><rect x="4.3" y="4.2" width="1.4" height="3.6" fill="#eef2f8"/></svg>
<div style="left:180.5px;top:690px;font-size:8.5px;color:#d0d7e4;letter-spacing:-0.2px">13:21:12 Workspace applied: Demo</div>
<div style="left:1089px;top:687px;width:1px;height:16px;background:#4e5e7e"></div>
<svg style="position:absolute;left:1095px;top:688px" width="13" height="13" viewBox="0 0 13 13"><path d="M1 9 L7 2 L12 6 L6 12 Z" fill="#e04848"/><path d="M1 9 L4 5.5 L9 9.5 L6 12 Z" fill="#9ab8e0"/></svg>
<div style="left:1113.5px;top:694px;width:0;height:0;border-left:2.5px solid transparent;border-right:2.5px solid transparent;border-top:3px solid #dfe5ef"></div>
<div style="left:1126.5px;top:690px;font-size:8.5px;color:#c8d0de;letter-spacing:-0.2px">13:21:13</div>
<div style="left:1162px;top:687px;width:1px;height:16px;background:#4e5e7e"></div>
<div style="left:1169px;top:690px;font-size:8.5px;color:#dfe5ef;letter-spacing:-0.2px">Demo</div>
<div style="left:1192px;top:694px;width:0;height:0;border-left:2.5px solid transparent;border-right:2.5px solid transparent;border-top:3px solid #dfe5ef"></div>
<div style="left:1204.5px;top:688.5px;width:5px;height:5px;background:#8ab4e4"></div>
<div style="left:1210.5px;top:688.5px;width:5px;height:5px;background:#8ab4e4"></div>
<div style="left:1204.5px;top:694.5px;width:5px;height:5px;background:#8ab4e4"></div>
<div style="left:1210.5px;top:694.5px;width:5px;height:5px;background:#8ab4e4"></div>
<div style="left:1218px;top:694px;width:0;height:0;border-left:2.5px solid transparent;border-right:2.5px solid transparent;border-top:3px solid #dfe5ef"></div>
</body></html>
